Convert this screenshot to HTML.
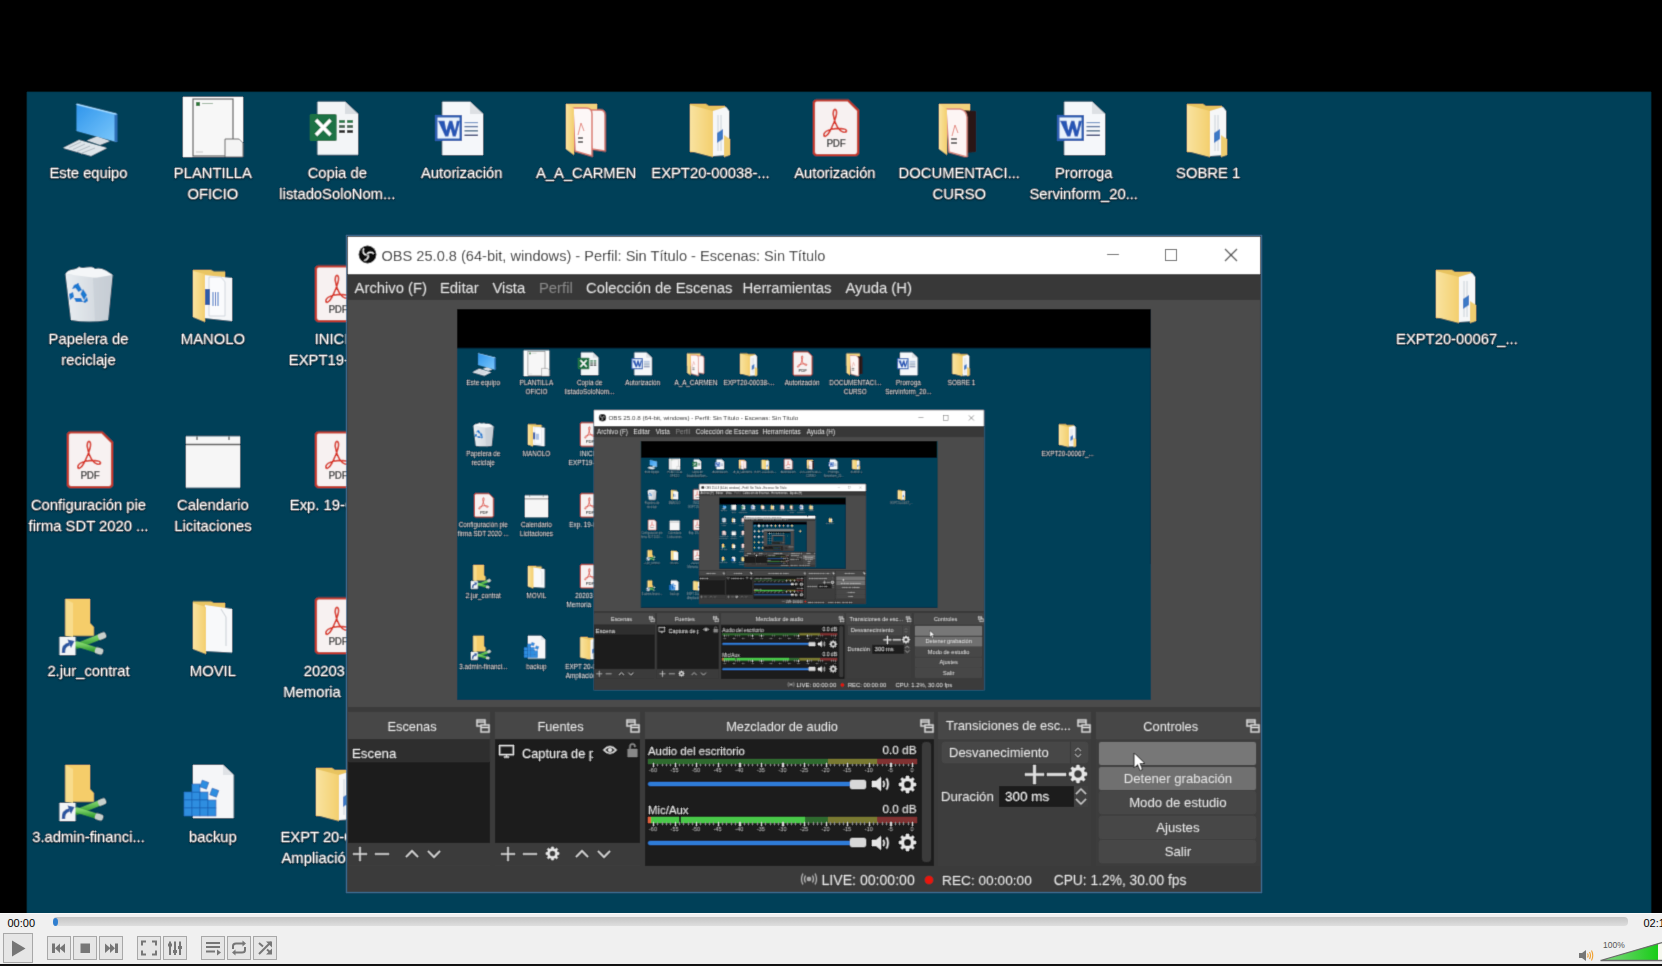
<!DOCTYPE html>
<html><head><meta charset="utf-8"><style>
*{margin:0;padding:0}
html,body{width:1662px;height:966px;overflow:hidden;background:#000;font-family:"Liberation Sans",sans-serif}
#vid{position:absolute;left:0;top:0;width:1662px;height:913px;background:#000;overflow:hidden;filter:url(#soft2)}
.scr{position:absolute;left:27px;top:0;width:1624px;height:913px}
.scr.nest{left:0;top:0;background:#000;transform-origin:0 0;transform:scale(0.4272)}
.dt{position:absolute;left:0;top:92px;width:1624px;height:821px;background:#003f58}
.ic{position:absolute;width:64px;height:64px;overflow:visible}
.lb{position:absolute;width:160px;text-align:center;color:#fff;font-size:14.8px;line-height:20px;white-space:nowrap;text-shadow:0 1px 2px rgba(0,0,0,.9),0 0 1px rgba(0,0,0,.8)}
.lbl{position:absolute;color:#fff;font-size:14.8px;line-height:20px;white-space:nowrap;text-shadow:0 1px 2px rgba(0,0,0,.9)}
.obs{position:absolute;left:320px;top:236px;width:914px;height:656px;background:#3a3a3a;box-shadow:0 0 0 1px #3d6e95;overflow:hidden}
.obs .b,.obs .t,.obs .pv{position:absolute}
.obs .t{white-space:nowrap;line-height:17px}
.pv{width:694px;height:391px;overflow:hidden}
.pv0{}
  .nest .lb,.nest .lbl{color:#e4eaee}
.nest .nest .lb,.nest .nest .lbl{opacity:.6}
#ctl{position:absolute;left:0;top:913px;width:1662px;height:53px;background:#f0f0f0}
#ctl .b{position:absolute}
</style></head>
<body>
<svg width="0" height="0" style="position:absolute">
<defs>
<filter id="soft2" x="0" y="0" width="100%" height="100%"><feConvolveMatrix order="3" kernelMatrix="0 1 0 1 4 1 0 1 0" divisor="8" edgeMode="duplicate"/></filter>
<filter id="soft" x="0" y="0" width="100%" height="100%"><feConvolveMatrix order="3" kernelMatrix="1 2 1 2 4 2 1 2 1" divisor="16" edgeMode="duplicate"/></filter>
<linearGradient id="gMon" x1="0" y1="0" x2="1" y2="1"><stop offset="0" stop-color="#2f95ec"/><stop offset="1" stop-color="#7cc8fb"/></linearGradient>
<linearGradient id="gFold" x1="0" y1="0" x2="1" y2="0"><stop offset="0" stop-color="#f9e3a0"/><stop offset="1" stop-color="#f3cf6e"/></linearGradient>
<linearGradient id="gBin" x1="0" y1="0" x2="1" y2="0"><stop offset="0" stop-color="#e9edf1"/><stop offset="1" stop-color="#c9d0d6"/></linearGradient>
<linearGradient id="gCab" x1="0" y1="0" x2="0" y2="1"><stop offset="0" stop-color="#7fd36a"/><stop offset="1" stop-color="#2f9a2f"/></linearGradient>

<symbol id="i-pc" viewBox="0 0 64 64">
 <polygon points="19.5,11 59.5,21 59.5,49 19.5,38" fill="url(#gMon)"/>
 <polygon points="57.5,20.5 60.5,21 60.5,49 57.5,48.5" fill="#2a6db5"/>
 <polygon points="19.5,10.5 59.5,20.5 59.5,22 19.5,12" fill="#9fd8ff"/>
 <polygon points="6,55 22,47 50,55 34,63" fill="#dfe5ea"/>
 <path d="M12,54.5 L24,49 M16,56.5 L28,51 M20,58.5 L33,53 M24,60.5 L38,55" stroke="#aab4bc" stroke-width="0.9"/>
 <polygon points="30,47.5 40,43.5 53,48 43,52" fill="#d6dce2"/>
</symbol>

<symbol id="i-plant" viewBox="0 0 64 64">
 <rect x="2" y="4" width="60" height="60" fill="#fbfbfb"/>
 <rect x="12" y="6" width="40" height="57" fill="#f7f7f7" stroke="#606060" stroke-width="1.2"/>
 <rect x="15" y="9" width="4" height="4" fill="#2f7a3b"/>
 <path d="M21,10.5 H32" stroke="#9bb59f" stroke-width="1"/>
 <path d="M15,59 H22" stroke="#bbb" stroke-width="0.8"/>
 <path d="M44,46 H58 L62,50 V64 H44 Z" fill="#f4f4f4" stroke="#6a6a6a" stroke-width="1"/>
</symbol>

<symbol id="i-xls" viewBox="0 0 64 64">
 <path d="M12.5,8.7 H40 L53,21 V61.7 H12.5 Z" fill="#f3f5f7"/>
 <path d="M40,8.7 V21 H53 Z" fill="#d9dde1"/>
 <g fill="#2f7f4f"><rect x="34" y="27" width="6" height="3"/><rect x="42" y="27" width="6" height="3"/><rect x="34" y="32" width="6" height="3" fill="#4c6b57"/><rect x="42" y="32" width="6" height="3" fill="#4c6b57"/><rect x="34" y="37" width="6" height="3" fill="#333"/><rect x="42" y="37" width="6" height="3" fill="#333"/></g>
 <rect x="4.7" y="21" width="27" height="27" rx="1.5" fill="#1f7244"/>
 <path d="M11,27 L25.5,42 M25.5,27 L11,42" stroke="#ffffff" stroke-width="3.4"/>
</symbol>

<symbol id="i-doc" viewBox="0 0 64 64">
 <path d="M12.3,8.7 H40 L53,21 V62 H12.3 Z" fill="#f5f7fa"/>
 <path d="M40,8.7 V21 H53 Z" fill="#dde0e4"/>
 <path d="M34.5,29.6 H48" stroke="#6f93c4" stroke-width="1.2"/>
 <path d="M34.5,33.6 H48" stroke="#4f6f9e" stroke-width="1.4"/>
 <path d="M34.5,37.8 H48" stroke="#5d7a95" stroke-width="1.6"/>
 <path d="M34.5,42.3 H48" stroke="#1d2f6a" stroke-width="1.4"/>
 <rect x="5" y="22" width="27" height="26" fill="#2b5db0"/>
 <rect x="7.5" y="24.5" width="22" height="21" fill="#e9f3fd"/>
 <path d="M8,27.8 H14.5 L16.3,37.5 L19.2,27.8 H22.3 L25,37.5 L26.8,27.8 H30 L25.8,43.5 H22.8 L20.6,35.5 L18.3,43.5 H15.2 Z" fill="#2857b5"/>
</symbol>

<symbol id="i-fpdf" viewBox="0 0 64 64">
 <path d="M12,11 H43 V40 H12 Z" fill="#f1d27d"/>
 <path d="M32,17 H46 Q51,17 51,22 V58 L38,56 Z" fill="#fbf4f4" stroke="#d9776d" stroke-width="1.5"/>
 <path d="M19,15 H32 Q38,15 38,21 V63 L21,58 Z" fill="#fdf7f7" stroke="#d9776d" stroke-width="1.5"/>
 <path d="M27,30 L24,42 M27,30 L30,38" stroke="#e07a70" stroke-width="0.9" fill="none"/>
 <path d="M24,45 H29 M24,49 H29" stroke="#444" stroke-width="1.6"/>
 <path d="M12,11 L20,15 V62 L12,56 Z" fill="url(#gFold)"/>
</symbol>

<symbol id="i-fdoc" viewBox="0 0 64 64">
 <path d="M11,11 H27 L30,13 H46 V59 H11 Z" fill="#e8c35f"/>
 <path d="M34,18 L47,14 L50,18 V62 L34,63 Z" fill="#f6f7f8"/>
 <path d="M39,22 V58 M42,22 V58" stroke="#bfc7cf" stroke-width="0.8"/>
 <path d="M38,40 L44,36 V46 L38,50 Z" fill="#3d7ac6"/>
 <path d="M11,12 L34,18 V64 L11,58 Z" fill="url(#gFold)"/>
 <path d="M45,42 L51,46 V62 L45,64 Z" fill="#efcd70"/>
</symbol>

<symbol id="i-fdark" viewBox="0 0 64 64">
 <path d="M12,11 H43 V40 H12 Z" fill="#f1d27d"/>
 <path d="M18,16 L49,18 V59 L38,60 Z" fill="#2b1514"/>
 <path d="M19,16 H33 Q39,17 40,24 V64 L22,59 Z" fill="#fdf5f4" stroke="#d9877d" stroke-width="1.4"/>
 <path d="M28,32 L25,43 M28,32 L31,40" stroke="#e07a70" stroke-width="0.9" fill="none"/>
 <path d="M24,46 H30 M24,50 H30" stroke="#444" stroke-width="1.6"/>
 <path d="M12,11 L20,16 V62 L12,56 Z" fill="url(#gFold)"/>
</symbol>

<symbol id="i-fplain" viewBox="0 0 64 64">
 <path d="M12,10.4 H30 L33,12 H44 V58 H12 Z" fill="#e9c563"/>
 <path d="M24,14 L51,18 V61.6 L24,60 Z" fill="#f8f9fa"/>
 <path d="M40,18 L45,26 V55" stroke="#c9ced3" stroke-width="1" fill="none"/>
 <path d="M12,12 L25,16 V63 L12,58 Z" fill="url(#gFold)"/>
</symbol>

<symbol id="i-fword" viewBox="0 0 64 64">
 <path d="M12,11 H30 L33,12.5 H44 V58 H12 Z" fill="#e9c563"/>
 <path d="M23,16 L51,19 V62 L23,59 Z" fill="#f6f7f9"/>
 <path d="M28,18 H40 L44,23 V57 H28 Z" fill="#fafbfd" stroke="#c8ced6" stroke-width="0.8"/>
 <rect x="24" y="30" width="5" height="16" fill="#2d5ba8"/>
 <path d="M32,33 V47 M34.5,33 V47 M37,33 V47" stroke="#3b6fc1" stroke-width="1"/>
 <path d="M12,12 L24,15 V63 L12,58 Z" fill="url(#gFold)"/>
</symbol>

<symbol id="i-pdf" viewBox="0 0 64 64">
 <path d="M13,7.5 H45 L55,17.5 V59 Q55,62 52,62 H14 Q11,62 11,59 V10.5 Q11,7.5 14,7.5 Z" fill="#f7f1f1" stroke="#c53a2c" stroke-width="2.2"/>
 <path d="M31,25 C29,19 31,15 33,17 C35,20 31,30 27,38 C24,44 20,45 21,41 C22,37 34,34 41,36 C45,37 44,40 40,39 C36,38 32,31 31,25 Z" fill="none" stroke="#d8392b" stroke-width="1.7"/>
 <text x="33" y="54" font-family="Liberation Sans" font-weight="bold" font-size="10" fill="#505050" text-anchor="middle" letter-spacing="-0.4">PDF</text>
</symbol>

<symbol id="i-bin" viewBox="0 0 64 64">
 <path d="M8.5,15 L55.5,16 L51,61 Q32,64 14,61 Z" fill="url(#gBin)"/>
 <path d="M8.5,15 C12,9 18,12 22,8 C27,11 33,6 38,10 C44,8 50,12 55.5,16 L40,19 Z" fill="#f4f6f8"/>
 <path d="M36,19 L55.5,16 L51,61 L38,62 Z" fill="#c4ccd3" opacity="0.6"/>
 <g fill="#1f7ad0">
  <path d="M17,27 L21,24 L25,31 L21.5,33 Z"/>
  <path d="M26,30 L30,36 L27,41 L23.5,35 Z"/>
  <path d="M26,43 L19,43 L17,39 L24,39 Z"/>
  <path d="M13,41 L12,35 L16,33 L17,38 Z"/>
  <path d="M22,24 L17,26 L15,30 L19,29 Z"/>
  <path d="M30,38 L31,42 L28,44 L26,43 Z"/>
 </g>
</symbol>

<symbol id="i-cal" viewBox="0 0 64 64">
 <rect x="5" y="11.4" width="54" height="51.2" fill="#f6f6f6"/>
 <path d="M5,19.5 H59" stroke="#555" stroke-width="1.6"/>
 <path d="M16,11.4 V15 M48,11.4 V15" stroke="#666" stroke-width="1.4"/>
</symbol>

<symbol id="i-net" viewBox="0 0 64 64">
 <path d="M8.5,8 H33 V32 L36.8,36 V44.7 H8.5 Z" fill="#f5cd6a"/>
 <path d="M8.5,8 L16,12 V46 L8.5,44.7 Z" fill="#f8dc8c"/>
 <path d="M20,55 L45,45" stroke="url(#gCab)" stroke-width="5.5" stroke-linecap="round"/>
 <path d="M20,53 L42,60" stroke="url(#gCab)" stroke-width="5.5" stroke-linecap="round"/>
 <rect x="41" y="42" width="8" height="6" rx="2" fill="#c8d0cc" transform="rotate(-22 45 45)"/>
 <rect x="38" y="57" width="8" height="6" rx="2" fill="#c8d0cc" transform="rotate(18 42 60)"/>
 <rect x="2.5" y="46" width="16" height="19" fill="#f2f4f6"/>
 <path d="M6.5,62 Q6,54 12.5,53" stroke="#2b56a0" stroke-width="3.4" fill="none"/><path d="M10.5,48.5 L17.5,50 L14,57 Z" fill="#2b56a0"/>
</symbol>

<symbol id="i-bak" viewBox="0 0 64 64">
 <path d="M12,8 H42 L52.6,18 V61 H12 Z" fill="#f5f6f8"/>
 <path d="M42,8 V18 H52.6 Z" fill="#dfe2e6"/>
 <g fill="#2f8ee0" stroke="#1a5fb0" stroke-width="0.6">
  <rect x="3" y="35" width="8" height="8"/><rect x="11" y="35" width="8" height="8"/><rect x="19" y="35" width="8" height="8"/>
  <rect x="3" y="43" width="8" height="8"/><rect x="11" y="43" width="8" height="8"/><rect x="19" y="43" width="8" height="8"/><rect x="27" y="43" width="8" height="8"/>
  <rect x="3" y="51" width="8" height="8"/><rect x="11" y="51" width="8" height="8"/><rect x="19" y="51" width="8" height="8"/><rect x="27" y="51" width="8" height="8"/>
  <rect x="11" y="27" width="8" height="8"/>
  <rect x="20" y="24" width="7" height="7" transform="rotate(20 23 27)"/>
  <rect x="30" y="32" width="7" height="7" transform="rotate(20 33 35)"/>
 </g>
</symbol>

<symbol id="i-undock" viewBox="0 0 14 14">
 <rect x="1" y="1" width="8" height="6" fill="none" stroke="#d8d8d8" stroke-width="1.4"/>
 <path d="M1,3 H9" stroke="#d8d8d8" stroke-width="1.4"/>
 <rect x="5" y="6" width="8" height="7" fill="#474747" stroke="#d8d8d8" stroke-width="1.4"/>
 <path d="M5,8.5 H13" stroke="#d8d8d8" stroke-width="1.4"/>
</symbol>

<symbol id="i-gear" viewBox="0 0 20 20">
 <path fill="#e6e6e6" fill-rule="evenodd" d="M8.6,1 H11.4 L11.9,3.4 L13.6,4.1 L15.6,2.7 L17.3,4.4 L15.9,6.4 L16.6,8.1 L19,8.6 V11.4 L16.6,11.9 L15.9,13.6 L17.3,15.6 L15.6,17.3 L13.6,15.9 L11.9,16.6 L11.4,19 H8.6 L8.1,16.6 L6.4,15.9 L4.4,17.3 L2.7,15.6 L4.1,13.6 L3.4,11.9 L1,11.4 V8.6 L3.4,8.1 L4.1,6.4 L2.7,4.4 L4.4,2.7 L6.4,4.1 L8.1,3.4 Z M10,6.2 A3.8,3.8 0 1 0 10,13.8 A3.8,3.8 0 1 0 10,6.2 Z"/>
</symbol>

<symbol id="i-spk" viewBox="0 0 20 16">
 <path d="M1,5 H5 L10,1 V15 L5,11 H1 Z" fill="#e6e6e6"/>
 <path d="M12.5,5 Q14,8 12.5,11" stroke="#e6e6e6" stroke-width="1.6" fill="none"/>
 <path d="M15.5,2.5 Q18.5,8 15.5,13.5" stroke="#e6e6e6" stroke-width="1.6" fill="none"/>
</symbol>

<symbol id="i-obs" viewBox="0 0 20 20">
 <circle cx="10" cy="10" r="9.4" fill="#111"/>
 <g fill="none" stroke="#e8e8e8" stroke-width="1.5">
  <path d="M6.2,3.6 A4.3,4.3 0 0 0 9.3,10.6"/>
  <path d="M16.5,9.2 A4.3,4.3 0 0 0 9.6,9.4"/>
  <path d="M6.5,16.2 A4.3,4.3 0 0 0 10.3,10.1"/>
 </g>
</symbol>
</defs>
</svg>
<div id="vid"><div class="scr"><div class="dt"></div><svg class="ic" style="left:29.5px;top:93.0px" viewBox="0 0 64 64"><use href="#i-pc"/></svg><div class="lb" style="left:-18.5px;top:163.0px">Este equipo</div><svg class="ic" style="left:153.9px;top:93.0px" viewBox="0 0 64 64"><use href="#i-plant"/></svg><div class="lb" style="left:105.9px;top:163.0px">PLANTILLA</div><div class="lb" style="left:105.9px;top:184.0px">OFICIO</div><svg class="ic" style="left:278.3px;top:93.0px" viewBox="0 0 64 64"><use href="#i-xls"/></svg><div class="lb" style="left:230.3px;top:163.0px">Copia de</div><div class="lb" style="left:230.3px;top:184.0px">listadoSoloNom...</div><svg class="ic" style="left:402.7px;top:93.0px" viewBox="0 0 64 64"><use href="#i-doc"/></svg><div class="lb" style="left:354.7px;top:163.0px">Autorización</div><svg class="ic" style="left:527.1px;top:93.0px" viewBox="0 0 64 64"><use href="#i-fpdf"/></svg><div class="lb" style="left:479.1px;top:163.0px">A_A_CARMEN</div><svg class="ic" style="left:651.5px;top:93.0px" viewBox="0 0 64 64"><use href="#i-fdoc"/></svg><div class="lb" style="left:603.5px;top:163.0px">EXPT20-00038-...</div><svg class="ic" style="left:775.9px;top:93.0px" viewBox="0 0 64 64"><use href="#i-pdf"/></svg><div class="lb" style="left:727.9px;top:163.0px">Autorización</div><svg class="ic" style="left:900.3px;top:93.0px" viewBox="0 0 64 64"><use href="#i-fdark"/></svg><div class="lb" style="left:852.3px;top:163.0px">DOCUMENTACI...</div><div class="lb" style="left:852.3px;top:184.0px">CURSO</div><svg class="ic" style="left:1024.7px;top:93.0px" viewBox="0 0 64 64"><use href="#i-doc"/></svg><div class="lb" style="left:976.7px;top:163.0px">Prorroga</div><div class="lb" style="left:976.7px;top:184.0px">Servinform_20...</div><svg class="ic" style="left:1149.1px;top:93.0px" viewBox="0 0 64 64"><use href="#i-fdoc"/></svg><div class="lb" style="left:1101.1px;top:163.0px">SOBRE 1</div><svg class="ic" style="left:1397.9px;top:259.0px" viewBox="0 0 64 64"><use href="#i-fdoc"/></svg><div class="lb" style="left:1349.9px;top:329.0px">EXPT20-00067_...</div><svg class="ic" style="left:29.5px;top:259.0px" viewBox="0 0 64 64"><use href="#i-bin"/></svg><div class="lb" style="left:-18.5px;top:329.0px">Papelera de</div><div class="lb" style="left:-18.5px;top:350.0px">reciclaje</div><svg class="ic" style="left:153.9px;top:259.0px" viewBox="0 0 64 64"><use href="#i-fword"/></svg><div class="lb" style="left:105.9px;top:329.0px">MANOLO</div><svg class="ic" style="left:29.5px;top:425.0px" viewBox="0 0 64 64"><use href="#i-pdf"/></svg><div class="lb" style="left:-18.5px;top:495.0px">Configuración pie</div><div class="lb" style="left:-18.5px;top:516.0px">firma SDT 2020 ...</div><svg class="ic" style="left:153.9px;top:425.0px" viewBox="0 0 64 64"><use href="#i-cal"/></svg><div class="lb" style="left:105.9px;top:495.0px">Calendario</div><div class="lb" style="left:105.9px;top:516.0px">Licitaciones</div><svg class="ic" style="left:29.5px;top:591.0px" viewBox="0 0 64 64"><use href="#i-net"/></svg><div class="lb" style="left:-18.5px;top:661.0px">2.jur_contrat</div><svg class="ic" style="left:153.9px;top:591.0px" viewBox="0 0 64 64"><use href="#i-fplain"/></svg><div class="lb" style="left:105.9px;top:661.0px">MOVIL</div><svg class="ic" style="left:29.5px;top:757.0px" viewBox="0 0 64 64"><use href="#i-net"/></svg><div class="lb" style="left:-18.5px;top:827.0px">3.admin-financi...</div><svg class="ic" style="left:153.9px;top:757.0px" viewBox="0 0 64 64"><use href="#i-bak"/></svg><div class="lb" style="left:105.9px;top:827.0px">backup</div><svg class="ic" style="left:278.3px;top:259.0px" viewBox="0 0 64 64"><use href="#i-pdf"/></svg><div class="lbl" style="left:287.7px;top:329.0px">INICIO</div><div class="lbl" style="left:261.8px;top:350.0px">EXPT19-00</div><svg class="ic" style="left:278.3px;top:425.0px" viewBox="0 0 64 64"><use href="#i-pdf"/></svg><div class="lbl" style="left:262.8px;top:495.0px">Exp. 19-00</div><svg class="ic" style="left:278.3px;top:591.0px" viewBox="0 0 64 64"><use href="#i-pdf"/></svg><div class="lbl" style="left:276.7px;top:661.0px">20203</div><div class="lbl" style="left:256.3px;top:682.0px">Memoria</div><svg class="ic" style="left:278.3px;top:757.0px" viewBox="0 0 64 64"><use href="#i-fdoc"/></svg><div class="lbl" style="left:253.4px;top:827.0px">EXPT 20-00</div><div class="lbl" style="left:254.5px;top:848.0px">Ampliación</div><div class="obs"><div class="b" style="left:1.0px;top:1.0px;width:912.0px;height:37.0px;background:#fff"></div><svg class="ic" style="left:11.0px;top:9.0px;width:19px;height:19px;" viewBox="0 0 20 20"><use href="#i-obs"/></svg><div class="t" style="left:34.5px;top:11.8px;font-size:14.6px;color:#2e2e2e;white-space:nowrap">OBS 25.0.8 (64-bit, windows) - Perfil: Sin Título - Escenas: Sin Título</div><div class="b" style="left:760.0px;top:18.0px;width:12.0px;height:1.3px;background:#444"></div><div class="b" style="left:818.0px;top:12.5px;width:12.0px;height:12.0px;border:1.2px solid #444;box-sizing:border-box"></div><svg class="ic" style="left:877px;top:12px;width:14px;height:14px" viewBox="0 0 14 14"><path d="M1,1 L13,13 M13,1 L1,13" stroke="#444" stroke-width="1.3"/></svg><div class="b" style="left:1.0px;top:38.0px;width:912.0px;height:26.0px;background:#393939"></div><div class="t" style="left:7.6px;top:44.0px;font-size:14.8px;color:#dedede">Archivo (F)</div><div class="t" style="left:93.0px;top:44.0px;font-size:14.8px;color:#dedede">Editar</div><div class="t" style="left:145.5px;top:44.0px;font-size:14.8px;color:#dedede">Vista</div><div class="t" style="left:192.0px;top:44.0px;font-size:14.8px;color:#858585">Perfil</div><div class="t" style="left:239.0px;top:44.0px;font-size:14.8px;color:#dedede">Colección de Escenas</div><div class="t" style="left:395.5px;top:44.0px;font-size:14.8px;color:#dedede">Herramientas</div><div class="t" style="left:498.5px;top:44.0px;font-size:14.8px;color:#dedede">Ayuda (H)</div><div class="b" style="left:1.0px;top:64.0px;width:912.0px;height:407.0px;background:#4c4c4c"></div><div class="pv pv0" style="left:110px;top:73px"><div class="scr nest"><div class="dt"></div><svg class="ic" style="left:29.5px;top:93.0px" viewBox="0 0 64 64"><use href="#i-pc"/></svg><div class="lb" style="left:-18.5px;top:163.0px">Este equipo</div><svg class="ic" style="left:153.9px;top:93.0px" viewBox="0 0 64 64"><use href="#i-plant"/></svg><div class="lb" style="left:105.9px;top:163.0px">PLANTILLA</div><div class="lb" style="left:105.9px;top:184.0px">OFICIO</div><svg class="ic" style="left:278.3px;top:93.0px" viewBox="0 0 64 64"><use href="#i-xls"/></svg><div class="lb" style="left:230.3px;top:163.0px">Copia de</div><div class="lb" style="left:230.3px;top:184.0px">listadoSoloNom...</div><svg class="ic" style="left:402.7px;top:93.0px" viewBox="0 0 64 64"><use href="#i-doc"/></svg><div class="lb" style="left:354.7px;top:163.0px">Autorización</div><svg class="ic" style="left:527.1px;top:93.0px" viewBox="0 0 64 64"><use href="#i-fpdf"/></svg><div class="lb" style="left:479.1px;top:163.0px">A_A_CARMEN</div><svg class="ic" style="left:651.5px;top:93.0px" viewBox="0 0 64 64"><use href="#i-fdoc"/></svg><div class="lb" style="left:603.5px;top:163.0px">EXPT20-00038-...</div><svg class="ic" style="left:775.9px;top:93.0px" viewBox="0 0 64 64"><use href="#i-pdf"/></svg><div class="lb" style="left:727.9px;top:163.0px">Autorización</div><svg class="ic" style="left:900.3px;top:93.0px" viewBox="0 0 64 64"><use href="#i-fdark"/></svg><div class="lb" style="left:852.3px;top:163.0px">DOCUMENTACI...</div><div class="lb" style="left:852.3px;top:184.0px">CURSO</div><svg class="ic" style="left:1024.7px;top:93.0px" viewBox="0 0 64 64"><use href="#i-doc"/></svg><div class="lb" style="left:976.7px;top:163.0px">Prorroga</div><div class="lb" style="left:976.7px;top:184.0px">Servinform_20...</div><svg class="ic" style="left:1149.1px;top:93.0px" viewBox="0 0 64 64"><use href="#i-fdoc"/></svg><div class="lb" style="left:1101.1px;top:163.0px">SOBRE 1</div><svg class="ic" style="left:1397.9px;top:259.0px" viewBox="0 0 64 64"><use href="#i-fdoc"/></svg><div class="lb" style="left:1349.9px;top:329.0px">EXPT20-00067_...</div><svg class="ic" style="left:29.5px;top:259.0px" viewBox="0 0 64 64"><use href="#i-bin"/></svg><div class="lb" style="left:-18.5px;top:329.0px">Papelera de</div><div class="lb" style="left:-18.5px;top:350.0px">reciclaje</div><svg class="ic" style="left:153.9px;top:259.0px" viewBox="0 0 64 64"><use href="#i-fword"/></svg><div class="lb" style="left:105.9px;top:329.0px">MANOLO</div><svg class="ic" style="left:29.5px;top:425.0px" viewBox="0 0 64 64"><use href="#i-pdf"/></svg><div class="lb" style="left:-18.5px;top:495.0px">Configuración pie</div><div class="lb" style="left:-18.5px;top:516.0px">firma SDT 2020 ...</div><svg class="ic" style="left:153.9px;top:425.0px" viewBox="0 0 64 64"><use href="#i-cal"/></svg><div class="lb" style="left:105.9px;top:495.0px">Calendario</div><div class="lb" style="left:105.9px;top:516.0px">Licitaciones</div><svg class="ic" style="left:29.5px;top:591.0px" viewBox="0 0 64 64"><use href="#i-net"/></svg><div class="lb" style="left:-18.5px;top:661.0px">2.jur_contrat</div><svg class="ic" style="left:153.9px;top:591.0px" viewBox="0 0 64 64"><use href="#i-fplain"/></svg><div class="lb" style="left:105.9px;top:661.0px">MOVIL</div><svg class="ic" style="left:29.5px;top:757.0px" viewBox="0 0 64 64"><use href="#i-net"/></svg><div class="lb" style="left:-18.5px;top:827.0px">3.admin-financi...</div><svg class="ic" style="left:153.9px;top:757.0px" viewBox="0 0 64 64"><use href="#i-bak"/></svg><div class="lb" style="left:105.9px;top:827.0px">backup</div><svg class="ic" style="left:278.3px;top:259.0px" viewBox="0 0 64 64"><use href="#i-pdf"/></svg><div class="lbl" style="left:287.7px;top:329.0px">INICIO</div><div class="lbl" style="left:261.8px;top:350.0px">EXPT19-00</div><svg class="ic" style="left:278.3px;top:425.0px" viewBox="0 0 64 64"><use href="#i-pdf"/></svg><div class="lbl" style="left:262.8px;top:495.0px">Exp. 19-00</div><svg class="ic" style="left:278.3px;top:591.0px" viewBox="0 0 64 64"><use href="#i-pdf"/></svg><div class="lbl" style="left:276.7px;top:661.0px">20203</div><div class="lbl" style="left:256.3px;top:682.0px">Memoria</div><svg class="ic" style="left:278.3px;top:757.0px" viewBox="0 0 64 64"><use href="#i-fdoc"/></svg><div class="lbl" style="left:253.4px;top:827.0px">EXPT 20-00</div><div class="lbl" style="left:254.5px;top:848.0px">Ampliación</div><div class="obs"><div class="b" style="left:1.0px;top:1.0px;width:912.0px;height:37.0px;background:#fff"></div><svg class="ic" style="left:11.0px;top:9.0px;width:19px;height:19px;" viewBox="0 0 20 20"><use href="#i-obs"/></svg><div class="t" style="left:34.5px;top:11.8px;font-size:14.6px;color:#2e2e2e;white-space:nowrap">OBS 25.0.8 (64-bit, windows) - Perfil: Sin Título - Escenas: Sin Título</div><div class="b" style="left:760.0px;top:18.0px;width:12.0px;height:1.3px;background:#444"></div><div class="b" style="left:818.0px;top:12.5px;width:12.0px;height:12.0px;border:1.2px solid #444;box-sizing:border-box"></div><svg class="ic" style="left:877px;top:12px;width:14px;height:14px" viewBox="0 0 14 14"><path d="M1,1 L13,13 M13,1 L1,13" stroke="#444" stroke-width="1.3"/></svg><div class="b" style="left:1.0px;top:38.0px;width:912.0px;height:26.0px;background:#393939"></div><div class="t" style="left:7.6px;top:44.0px;font-size:14.8px;color:#dedede">Archivo (F)</div><div class="t" style="left:93.0px;top:44.0px;font-size:14.8px;color:#dedede">Editar</div><div class="t" style="left:145.5px;top:44.0px;font-size:14.8px;color:#dedede">Vista</div><div class="t" style="left:192.0px;top:44.0px;font-size:14.8px;color:#858585">Perfil</div><div class="t" style="left:239.0px;top:44.0px;font-size:14.8px;color:#dedede">Colección de Escenas</div><div class="t" style="left:395.5px;top:44.0px;font-size:14.8px;color:#dedede">Herramientas</div><div class="t" style="left:498.5px;top:44.0px;font-size:14.8px;color:#dedede">Ayuda (H)</div><div class="b" style="left:1.0px;top:64.0px;width:912.0px;height:407.0px;background:#4c4c4c"></div><div class="pv" style="left:110px;top:73px"><div class="scr nest"><div class="dt"></div><svg class="ic" style="left:29.5px;top:93.0px" viewBox="0 0 64 64"><use href="#i-pc"/></svg><div class="lb" style="left:-18.5px;top:163.0px">Este equipo</div><svg class="ic" style="left:153.9px;top:93.0px" viewBox="0 0 64 64"><use href="#i-plant"/></svg><div class="lb" style="left:105.9px;top:163.0px">PLANTILLA</div><div class="lb" style="left:105.9px;top:184.0px">OFICIO</div><svg class="ic" style="left:278.3px;top:93.0px" viewBox="0 0 64 64"><use href="#i-xls"/></svg><div class="lb" style="left:230.3px;top:163.0px">Copia de</div><div class="lb" style="left:230.3px;top:184.0px">listadoSoloNom...</div><svg class="ic" style="left:402.7px;top:93.0px" viewBox="0 0 64 64"><use href="#i-doc"/></svg><div class="lb" style="left:354.7px;top:163.0px">Autorización</div><svg class="ic" style="left:527.1px;top:93.0px" viewBox="0 0 64 64"><use href="#i-fpdf"/></svg><div class="lb" style="left:479.1px;top:163.0px">A_A_CARMEN</div><svg class="ic" style="left:651.5px;top:93.0px" viewBox="0 0 64 64"><use href="#i-fdoc"/></svg><div class="lb" style="left:603.5px;top:163.0px">EXPT20-00038-...</div><svg class="ic" style="left:775.9px;top:93.0px" viewBox="0 0 64 64"><use href="#i-pdf"/></svg><div class="lb" style="left:727.9px;top:163.0px">Autorización</div><svg class="ic" style="left:900.3px;top:93.0px" viewBox="0 0 64 64"><use href="#i-fdark"/></svg><div class="lb" style="left:852.3px;top:163.0px">DOCUMENTACI...</div><div class="lb" style="left:852.3px;top:184.0px">CURSO</div><svg class="ic" style="left:1024.7px;top:93.0px" viewBox="0 0 64 64"><use href="#i-doc"/></svg><div class="lb" style="left:976.7px;top:163.0px">Prorroga</div><div class="lb" style="left:976.7px;top:184.0px">Servinform_20...</div><svg class="ic" style="left:1149.1px;top:93.0px" viewBox="0 0 64 64"><use href="#i-fdoc"/></svg><div class="lb" style="left:1101.1px;top:163.0px">SOBRE 1</div><svg class="ic" style="left:1397.9px;top:259.0px" viewBox="0 0 64 64"><use href="#i-fdoc"/></svg><div class="lb" style="left:1349.9px;top:329.0px">EXPT20-00067_...</div><svg class="ic" style="left:29.5px;top:259.0px" viewBox="0 0 64 64"><use href="#i-bin"/></svg><div class="lb" style="left:-18.5px;top:329.0px">Papelera de</div><div class="lb" style="left:-18.5px;top:350.0px">reciclaje</div><svg class="ic" style="left:153.9px;top:259.0px" viewBox="0 0 64 64"><use href="#i-fword"/></svg><div class="lb" style="left:105.9px;top:329.0px">MANOLO</div><svg class="ic" style="left:29.5px;top:425.0px" viewBox="0 0 64 64"><use href="#i-pdf"/></svg><div class="lb" style="left:-18.5px;top:495.0px">Configuración pie</div><div class="lb" style="left:-18.5px;top:516.0px">firma SDT 2020 ...</div><svg class="ic" style="left:153.9px;top:425.0px" viewBox="0 0 64 64"><use href="#i-cal"/></svg><div class="lb" style="left:105.9px;top:495.0px">Calendario</div><div class="lb" style="left:105.9px;top:516.0px">Licitaciones</div><svg class="ic" style="left:29.5px;top:591.0px" viewBox="0 0 64 64"><use href="#i-net"/></svg><div class="lb" style="left:-18.5px;top:661.0px">2.jur_contrat</div><svg class="ic" style="left:153.9px;top:591.0px" viewBox="0 0 64 64"><use href="#i-fplain"/></svg><div class="lb" style="left:105.9px;top:661.0px">MOVIL</div><svg class="ic" style="left:29.5px;top:757.0px" viewBox="0 0 64 64"><use href="#i-net"/></svg><div class="lb" style="left:-18.5px;top:827.0px">3.admin-financi...</div><svg class="ic" style="left:153.9px;top:757.0px" viewBox="0 0 64 64"><use href="#i-bak"/></svg><div class="lb" style="left:105.9px;top:827.0px">backup</div><svg class="ic" style="left:278.3px;top:259.0px" viewBox="0 0 64 64"><use href="#i-pdf"/></svg><div class="lbl" style="left:287.7px;top:329.0px">INICIO</div><div class="lbl" style="left:261.8px;top:350.0px">EXPT19-00</div><svg class="ic" style="left:278.3px;top:425.0px" viewBox="0 0 64 64"><use href="#i-pdf"/></svg><div class="lbl" style="left:262.8px;top:495.0px">Exp. 19-00</div><svg class="ic" style="left:278.3px;top:591.0px" viewBox="0 0 64 64"><use href="#i-pdf"/></svg><div class="lbl" style="left:276.7px;top:661.0px">20203</div><div class="lbl" style="left:256.3px;top:682.0px">Memoria</div><svg class="ic" style="left:278.3px;top:757.0px" viewBox="0 0 64 64"><use href="#i-fdoc"/></svg><div class="lbl" style="left:253.4px;top:827.0px">EXPT 20-00</div><div class="lbl" style="left:254.5px;top:848.0px">Ampliación</div><div class="obs"><div class="b" style="left:1.0px;top:1.0px;width:912.0px;height:37.0px;background:#fff"></div><svg class="ic" style="left:11.0px;top:9.0px;width:19px;height:19px;" viewBox="0 0 20 20"><use href="#i-obs"/></svg><div class="t" style="left:34.5px;top:11.8px;font-size:14.6px;color:#2e2e2e;white-space:nowrap">OBS 25.0.8 (64-bit, windows) - Perfil: Sin Título - Escenas: Sin Título</div><div class="b" style="left:760.0px;top:18.0px;width:12.0px;height:1.3px;background:#444"></div><div class="b" style="left:818.0px;top:12.5px;width:12.0px;height:12.0px;border:1.2px solid #444;box-sizing:border-box"></div><svg class="ic" style="left:877px;top:12px;width:14px;height:14px" viewBox="0 0 14 14"><path d="M1,1 L13,13 M13,1 L1,13" stroke="#444" stroke-width="1.3"/></svg><div class="b" style="left:1.0px;top:38.0px;width:912.0px;height:26.0px;background:#393939"></div><div class="t" style="left:7.6px;top:44.0px;font-size:14.8px;color:#dedede">Archivo (F)</div><div class="t" style="left:93.0px;top:44.0px;font-size:14.8px;color:#dedede">Editar</div><div class="t" style="left:145.5px;top:44.0px;font-size:14.8px;color:#dedede">Vista</div><div class="t" style="left:192.0px;top:44.0px;font-size:14.8px;color:#858585">Perfil</div><div class="t" style="left:239.0px;top:44.0px;font-size:14.8px;color:#dedede">Colección de Escenas</div><div class="t" style="left:395.5px;top:44.0px;font-size:14.8px;color:#dedede">Herramientas</div><div class="t" style="left:498.5px;top:44.0px;font-size:14.8px;color:#dedede">Ayuda (H)</div><div class="b" style="left:1.0px;top:64.0px;width:912.0px;height:407.0px;background:#4c4c4c"></div><div class="pv" style="left:110px;top:73px"><div class="scr nest"><div class="dt"></div><svg class="ic" style="left:29.5px;top:93.0px" viewBox="0 0 64 64"><use href="#i-pc"/></svg><div class="lb" style="left:-18.5px;top:163.0px">Este equipo</div><svg class="ic" style="left:153.9px;top:93.0px" viewBox="0 0 64 64"><use href="#i-plant"/></svg><div class="lb" style="left:105.9px;top:163.0px">PLANTILLA</div><div class="lb" style="left:105.9px;top:184.0px">OFICIO</div><svg class="ic" style="left:278.3px;top:93.0px" viewBox="0 0 64 64"><use href="#i-xls"/></svg><div class="lb" style="left:230.3px;top:163.0px">Copia de</div><div class="lb" style="left:230.3px;top:184.0px">listadoSoloNom...</div><svg class="ic" style="left:402.7px;top:93.0px" viewBox="0 0 64 64"><use href="#i-doc"/></svg><div class="lb" style="left:354.7px;top:163.0px">Autorización</div><svg class="ic" style="left:527.1px;top:93.0px" viewBox="0 0 64 64"><use href="#i-fpdf"/></svg><div class="lb" style="left:479.1px;top:163.0px">A_A_CARMEN</div><svg class="ic" style="left:651.5px;top:93.0px" viewBox="0 0 64 64"><use href="#i-fdoc"/></svg><div class="lb" style="left:603.5px;top:163.0px">EXPT20-00038-...</div><svg class="ic" style="left:775.9px;top:93.0px" viewBox="0 0 64 64"><use href="#i-pdf"/></svg><div class="lb" style="left:727.9px;top:163.0px">Autorización</div><svg class="ic" style="left:900.3px;top:93.0px" viewBox="0 0 64 64"><use href="#i-fdark"/></svg><div class="lb" style="left:852.3px;top:163.0px">DOCUMENTACI...</div><div class="lb" style="left:852.3px;top:184.0px">CURSO</div><svg class="ic" style="left:1024.7px;top:93.0px" viewBox="0 0 64 64"><use href="#i-doc"/></svg><div class="lb" style="left:976.7px;top:163.0px">Prorroga</div><div class="lb" style="left:976.7px;top:184.0px">Servinform_20...</div><svg class="ic" style="left:1149.1px;top:93.0px" viewBox="0 0 64 64"><use href="#i-fdoc"/></svg><div class="lb" style="left:1101.1px;top:163.0px">SOBRE 1</div><svg class="ic" style="left:1397.9px;top:259.0px" viewBox="0 0 64 64"><use href="#i-fdoc"/></svg><div class="lb" style="left:1349.9px;top:329.0px">EXPT20-00067_...</div><svg class="ic" style="left:29.5px;top:259.0px" viewBox="0 0 64 64"><use href="#i-bin"/></svg><div class="lb" style="left:-18.5px;top:329.0px">Papelera de</div><div class="lb" style="left:-18.5px;top:350.0px">reciclaje</div><svg class="ic" style="left:153.9px;top:259.0px" viewBox="0 0 64 64"><use href="#i-fword"/></svg><div class="lb" style="left:105.9px;top:329.0px">MANOLO</div><svg class="ic" style="left:29.5px;top:425.0px" viewBox="0 0 64 64"><use href="#i-pdf"/></svg><div class="lb" style="left:-18.5px;top:495.0px">Configuración pie</div><div class="lb" style="left:-18.5px;top:516.0px">firma SDT 2020 ...</div><svg class="ic" style="left:153.9px;top:425.0px" viewBox="0 0 64 64"><use href="#i-cal"/></svg><div class="lb" style="left:105.9px;top:495.0px">Calendario</div><div class="lb" style="left:105.9px;top:516.0px">Licitaciones</div><svg class="ic" style="left:29.5px;top:591.0px" viewBox="0 0 64 64"><use href="#i-net"/></svg><div class="lb" style="left:-18.5px;top:661.0px">2.jur_contrat</div><svg class="ic" style="left:153.9px;top:591.0px" viewBox="0 0 64 64"><use href="#i-fplain"/></svg><div class="lb" style="left:105.9px;top:661.0px">MOVIL</div><svg class="ic" style="left:29.5px;top:757.0px" viewBox="0 0 64 64"><use href="#i-net"/></svg><div class="lb" style="left:-18.5px;top:827.0px">3.admin-financi...</div><svg class="ic" style="left:153.9px;top:757.0px" viewBox="0 0 64 64"><use href="#i-bak"/></svg><div class="lb" style="left:105.9px;top:827.0px">backup</div><svg class="ic" style="left:278.3px;top:259.0px" viewBox="0 0 64 64"><use href="#i-pdf"/></svg><div class="lbl" style="left:287.7px;top:329.0px">INICIO</div><div class="lbl" style="left:261.8px;top:350.0px">EXPT19-00</div><svg class="ic" style="left:278.3px;top:425.0px" viewBox="0 0 64 64"><use href="#i-pdf"/></svg><div class="lbl" style="left:262.8px;top:495.0px">Exp. 19-00</div><svg class="ic" style="left:278.3px;top:591.0px" viewBox="0 0 64 64"><use href="#i-pdf"/></svg><div class="lbl" style="left:276.7px;top:661.0px">20203</div><div class="lbl" style="left:256.3px;top:682.0px">Memoria</div><svg class="ic" style="left:278.3px;top:757.0px" viewBox="0 0 64 64"><use href="#i-fdoc"/></svg><div class="lbl" style="left:253.4px;top:827.0px">EXPT 20-00</div><div class="lbl" style="left:254.5px;top:848.0px">Ampliación</div><div class="obs"><div class="b" style="left:1.0px;top:1.0px;width:912.0px;height:37.0px;background:#fff"></div><svg class="ic" style="left:11.0px;top:9.0px;width:19px;height:19px;" viewBox="0 0 20 20"><use href="#i-obs"/></svg><div class="t" style="left:34.5px;top:11.8px;font-size:14.6px;color:#2e2e2e;white-space:nowrap">OBS 25.0.8 (64-bit, windows) - Perfil: Sin Título - Escenas: Sin Título</div><div class="b" style="left:760.0px;top:18.0px;width:12.0px;height:1.3px;background:#444"></div><div class="b" style="left:818.0px;top:12.5px;width:12.0px;height:12.0px;border:1.2px solid #444;box-sizing:border-box"></div><svg class="ic" style="left:877px;top:12px;width:14px;height:14px" viewBox="0 0 14 14"><path d="M1,1 L13,13 M13,1 L1,13" stroke="#444" stroke-width="1.3"/></svg><div class="b" style="left:1.0px;top:38.0px;width:912.0px;height:26.0px;background:#393939"></div><div class="t" style="left:7.6px;top:44.0px;font-size:14.8px;color:#dedede">Archivo (F)</div><div class="t" style="left:93.0px;top:44.0px;font-size:14.8px;color:#dedede">Editar</div><div class="t" style="left:145.5px;top:44.0px;font-size:14.8px;color:#dedede">Vista</div><div class="t" style="left:192.0px;top:44.0px;font-size:14.8px;color:#858585">Perfil</div><div class="t" style="left:239.0px;top:44.0px;font-size:14.8px;color:#dedede">Colección de Escenas</div><div class="t" style="left:395.5px;top:44.0px;font-size:14.8px;color:#dedede">Herramientas</div><div class="t" style="left:498.5px;top:44.0px;font-size:14.8px;color:#dedede">Ayuda (H)</div><div class="b" style="left:1.0px;top:64.0px;width:912.0px;height:407.0px;background:#4c4c4c"></div><div class="pv" style="left:110px;top:73px"><div class="scr nest"><div class="dt"></div><svg class="ic" style="left:29.5px;top:93.0px" viewBox="0 0 64 64"><use href="#i-pc"/></svg><div class="lb" style="left:-18.5px;top:163.0px">Este equipo</div><svg class="ic" style="left:153.9px;top:93.0px" viewBox="0 0 64 64"><use href="#i-plant"/></svg><div class="lb" style="left:105.9px;top:163.0px">PLANTILLA</div><div class="lb" style="left:105.9px;top:184.0px">OFICIO</div><svg class="ic" style="left:278.3px;top:93.0px" viewBox="0 0 64 64"><use href="#i-xls"/></svg><div class="lb" style="left:230.3px;top:163.0px">Copia de</div><div class="lb" style="left:230.3px;top:184.0px">listadoSoloNom...</div><svg class="ic" style="left:402.7px;top:93.0px" viewBox="0 0 64 64"><use href="#i-doc"/></svg><div class="lb" style="left:354.7px;top:163.0px">Autorización</div><svg class="ic" style="left:527.1px;top:93.0px" viewBox="0 0 64 64"><use href="#i-fpdf"/></svg><div class="lb" style="left:479.1px;top:163.0px">A_A_CARMEN</div><svg class="ic" style="left:651.5px;top:93.0px" viewBox="0 0 64 64"><use href="#i-fdoc"/></svg><div class="lb" style="left:603.5px;top:163.0px">EXPT20-00038-...</div><svg class="ic" style="left:775.9px;top:93.0px" viewBox="0 0 64 64"><use href="#i-pdf"/></svg><div class="lb" style="left:727.9px;top:163.0px">Autorización</div><svg class="ic" style="left:900.3px;top:93.0px" viewBox="0 0 64 64"><use href="#i-fdark"/></svg><div class="lb" style="left:852.3px;top:163.0px">DOCUMENTACI...</div><div class="lb" style="left:852.3px;top:184.0px">CURSO</div><svg class="ic" style="left:1024.7px;top:93.0px" viewBox="0 0 64 64"><use href="#i-doc"/></svg><div class="lb" style="left:976.7px;top:163.0px">Prorroga</div><div class="lb" style="left:976.7px;top:184.0px">Servinform_20...</div><svg class="ic" style="left:1149.1px;top:93.0px" viewBox="0 0 64 64"><use href="#i-fdoc"/></svg><div class="lb" style="left:1101.1px;top:163.0px">SOBRE 1</div><svg class="ic" style="left:1397.9px;top:259.0px" viewBox="0 0 64 64"><use href="#i-fdoc"/></svg><div class="lb" style="left:1349.9px;top:329.0px">EXPT20-00067_...</div><svg class="ic" style="left:29.5px;top:259.0px" viewBox="0 0 64 64"><use href="#i-bin"/></svg><div class="lb" style="left:-18.5px;top:329.0px">Papelera de</div><div class="lb" style="left:-18.5px;top:350.0px">reciclaje</div><svg class="ic" style="left:153.9px;top:259.0px" viewBox="0 0 64 64"><use href="#i-fword"/></svg><div class="lb" style="left:105.9px;top:329.0px">MANOLO</div><svg class="ic" style="left:29.5px;top:425.0px" viewBox="0 0 64 64"><use href="#i-pdf"/></svg><div class="lb" style="left:-18.5px;top:495.0px">Configuración pie</div><div class="lb" style="left:-18.5px;top:516.0px">firma SDT 2020 ...</div><svg class="ic" style="left:153.9px;top:425.0px" viewBox="0 0 64 64"><use href="#i-cal"/></svg><div class="lb" style="left:105.9px;top:495.0px">Calendario</div><div class="lb" style="left:105.9px;top:516.0px">Licitaciones</div><svg class="ic" style="left:29.5px;top:591.0px" viewBox="0 0 64 64"><use href="#i-net"/></svg><div class="lb" style="left:-18.5px;top:661.0px">2.jur_contrat</div><svg class="ic" style="left:153.9px;top:591.0px" viewBox="0 0 64 64"><use href="#i-fplain"/></svg><div class="lb" style="left:105.9px;top:661.0px">MOVIL</div><svg class="ic" style="left:29.5px;top:757.0px" viewBox="0 0 64 64"><use href="#i-net"/></svg><div class="lb" style="left:-18.5px;top:827.0px">3.admin-financi...</div><svg class="ic" style="left:153.9px;top:757.0px" viewBox="0 0 64 64"><use href="#i-bak"/></svg><div class="lb" style="left:105.9px;top:827.0px">backup</div><svg class="ic" style="left:278.3px;top:259.0px" viewBox="0 0 64 64"><use href="#i-pdf"/></svg><div class="lbl" style="left:287.7px;top:329.0px">INICIO</div><div class="lbl" style="left:261.8px;top:350.0px">EXPT19-00</div><svg class="ic" style="left:278.3px;top:425.0px" viewBox="0 0 64 64"><use href="#i-pdf"/></svg><div class="lbl" style="left:262.8px;top:495.0px">Exp. 19-00</div><svg class="ic" style="left:278.3px;top:591.0px" viewBox="0 0 64 64"><use href="#i-pdf"/></svg><div class="lbl" style="left:276.7px;top:661.0px">20203</div><div class="lbl" style="left:256.3px;top:682.0px">Memoria</div><svg class="ic" style="left:278.3px;top:757.0px" viewBox="0 0 64 64"><use href="#i-fdoc"/></svg><div class="lbl" style="left:253.4px;top:827.0px">EXPT 20-00</div><div class="lbl" style="left:254.5px;top:848.0px">Ampliación</div><div class="obs"><div class="b" style="left:1.0px;top:1.0px;width:912.0px;height:37.0px;background:#fff"></div><svg class="ic" style="left:11.0px;top:9.0px;width:19px;height:19px;" viewBox="0 0 20 20"><use href="#i-obs"/></svg><div class="t" style="left:34.5px;top:11.8px;font-size:14.6px;color:#2e2e2e;white-space:nowrap">OBS 25.0.8 (64-bit, windows) - Perfil: Sin Título - Escenas: Sin Título</div><div class="b" style="left:760.0px;top:18.0px;width:12.0px;height:1.3px;background:#444"></div><div class="b" style="left:818.0px;top:12.5px;width:12.0px;height:12.0px;border:1.2px solid #444;box-sizing:border-box"></div><svg class="ic" style="left:877px;top:12px;width:14px;height:14px" viewBox="0 0 14 14"><path d="M1,1 L13,13 M13,1 L1,13" stroke="#444" stroke-width="1.3"/></svg><div class="b" style="left:1.0px;top:38.0px;width:912.0px;height:26.0px;background:#393939"></div><div class="t" style="left:7.6px;top:44.0px;font-size:14.8px;color:#dedede">Archivo (F)</div><div class="t" style="left:93.0px;top:44.0px;font-size:14.8px;color:#dedede">Editar</div><div class="t" style="left:145.5px;top:44.0px;font-size:14.8px;color:#dedede">Vista</div><div class="t" style="left:192.0px;top:44.0px;font-size:14.8px;color:#858585">Perfil</div><div class="t" style="left:239.0px;top:44.0px;font-size:14.8px;color:#dedede">Colección de Escenas</div><div class="t" style="left:395.5px;top:44.0px;font-size:14.8px;color:#dedede">Herramientas</div><div class="t" style="left:498.5px;top:44.0px;font-size:14.8px;color:#dedede">Ayuda (H)</div><div class="b" style="left:1.0px;top:64.0px;width:912.0px;height:407.0px;background:#4c4c4c"></div><div class="pv" style="left:110px;top:73px"><div class="scr nest"><div class="dt"></div><svg class="ic" style="left:29.5px;top:93.0px" viewBox="0 0 64 64"><use href="#i-pc"/></svg><div class="lb" style="left:-18.5px;top:163.0px">Este equipo</div><svg class="ic" style="left:153.9px;top:93.0px" viewBox="0 0 64 64"><use href="#i-plant"/></svg><div class="lb" style="left:105.9px;top:163.0px">PLANTILLA</div><div class="lb" style="left:105.9px;top:184.0px">OFICIO</div><svg class="ic" style="left:278.3px;top:93.0px" viewBox="0 0 64 64"><use href="#i-xls"/></svg><div class="lb" style="left:230.3px;top:163.0px">Copia de</div><div class="lb" style="left:230.3px;top:184.0px">listadoSoloNom...</div><svg class="ic" style="left:402.7px;top:93.0px" viewBox="0 0 64 64"><use href="#i-doc"/></svg><div class="lb" style="left:354.7px;top:163.0px">Autorización</div><svg class="ic" style="left:527.1px;top:93.0px" viewBox="0 0 64 64"><use href="#i-fpdf"/></svg><div class="lb" style="left:479.1px;top:163.0px">A_A_CARMEN</div><svg class="ic" style="left:651.5px;top:93.0px" viewBox="0 0 64 64"><use href="#i-fdoc"/></svg><div class="lb" style="left:603.5px;top:163.0px">EXPT20-00038-...</div><svg class="ic" style="left:775.9px;top:93.0px" viewBox="0 0 64 64"><use href="#i-pdf"/></svg><div class="lb" style="left:727.9px;top:163.0px">Autorización</div><svg class="ic" style="left:900.3px;top:93.0px" viewBox="0 0 64 64"><use href="#i-fdark"/></svg><div class="lb" style="left:852.3px;top:163.0px">DOCUMENTACI...</div><div class="lb" style="left:852.3px;top:184.0px">CURSO</div><svg class="ic" style="left:1024.7px;top:93.0px" viewBox="0 0 64 64"><use href="#i-doc"/></svg><div class="lb" style="left:976.7px;top:163.0px">Prorroga</div><div class="lb" style="left:976.7px;top:184.0px">Servinform_20...</div><svg class="ic" style="left:1149.1px;top:93.0px" viewBox="0 0 64 64"><use href="#i-fdoc"/></svg><div class="lb" style="left:1101.1px;top:163.0px">SOBRE 1</div><svg class="ic" style="left:1397.9px;top:259.0px" viewBox="0 0 64 64"><use href="#i-fdoc"/></svg><div class="lb" style="left:1349.9px;top:329.0px">EXPT20-00067_...</div><svg class="ic" style="left:29.5px;top:259.0px" viewBox="0 0 64 64"><use href="#i-bin"/></svg><div class="lb" style="left:-18.5px;top:329.0px">Papelera de</div><div class="lb" style="left:-18.5px;top:350.0px">reciclaje</div><svg class="ic" style="left:153.9px;top:259.0px" viewBox="0 0 64 64"><use href="#i-fword"/></svg><div class="lb" style="left:105.9px;top:329.0px">MANOLO</div><svg class="ic" style="left:29.5px;top:425.0px" viewBox="0 0 64 64"><use href="#i-pdf"/></svg><div class="lb" style="left:-18.5px;top:495.0px">Configuración pie</div><div class="lb" style="left:-18.5px;top:516.0px">firma SDT 2020 ...</div><svg class="ic" style="left:153.9px;top:425.0px" viewBox="0 0 64 64"><use href="#i-cal"/></svg><div class="lb" style="left:105.9px;top:495.0px">Calendario</div><div class="lb" style="left:105.9px;top:516.0px">Licitaciones</div><svg class="ic" style="left:29.5px;top:591.0px" viewBox="0 0 64 64"><use href="#i-net"/></svg><div class="lb" style="left:-18.5px;top:661.0px">2.jur_contrat</div><svg class="ic" style="left:153.9px;top:591.0px" viewBox="0 0 64 64"><use href="#i-fplain"/></svg><div class="lb" style="left:105.9px;top:661.0px">MOVIL</div><svg class="ic" style="left:29.5px;top:757.0px" viewBox="0 0 64 64"><use href="#i-net"/></svg><div class="lb" style="left:-18.5px;top:827.0px">3.admin-financi...</div><svg class="ic" style="left:153.9px;top:757.0px" viewBox="0 0 64 64"><use href="#i-bak"/></svg><div class="lb" style="left:105.9px;top:827.0px">backup</div><svg class="ic" style="left:278.3px;top:259.0px" viewBox="0 0 64 64"><use href="#i-pdf"/></svg><div class="lbl" style="left:287.7px;top:329.0px">INICIO</div><div class="lbl" style="left:261.8px;top:350.0px">EXPT19-00</div><svg class="ic" style="left:278.3px;top:425.0px" viewBox="0 0 64 64"><use href="#i-pdf"/></svg><div class="lbl" style="left:262.8px;top:495.0px">Exp. 19-00</div><svg class="ic" style="left:278.3px;top:591.0px" viewBox="0 0 64 64"><use href="#i-pdf"/></svg><div class="lbl" style="left:276.7px;top:661.0px">20203</div><div class="lbl" style="left:256.3px;top:682.0px">Memoria</div><svg class="ic" style="left:278.3px;top:757.0px" viewBox="0 0 64 64"><use href="#i-fdoc"/></svg><div class="lbl" style="left:253.4px;top:827.0px">EXPT 20-00</div><div class="lbl" style="left:254.5px;top:848.0px">Ampliación</div><div class="obs"><div class="b" style="left:1.0px;top:1.0px;width:912.0px;height:37.0px;background:#fff"></div><svg class="ic" style="left:11.0px;top:9.0px;width:19px;height:19px;" viewBox="0 0 20 20"><use href="#i-obs"/></svg><div class="t" style="left:34.5px;top:11.8px;font-size:14.6px;color:#2e2e2e;white-space:nowrap">OBS 25.0.8 (64-bit, windows) - Perfil: Sin Título - Escenas: Sin Título</div><div class="b" style="left:760.0px;top:18.0px;width:12.0px;height:1.3px;background:#444"></div><div class="b" style="left:818.0px;top:12.5px;width:12.0px;height:12.0px;border:1.2px solid #444;box-sizing:border-box"></div><svg class="ic" style="left:877px;top:12px;width:14px;height:14px" viewBox="0 0 14 14"><path d="M1,1 L13,13 M13,1 L1,13" stroke="#444" stroke-width="1.3"/></svg><div class="b" style="left:1.0px;top:38.0px;width:912.0px;height:26.0px;background:#393939"></div><div class="t" style="left:7.6px;top:44.0px;font-size:14.8px;color:#dedede">Archivo (F)</div><div class="t" style="left:93.0px;top:44.0px;font-size:14.8px;color:#dedede">Editar</div><div class="t" style="left:145.5px;top:44.0px;font-size:14.8px;color:#dedede">Vista</div><div class="t" style="left:192.0px;top:44.0px;font-size:14.8px;color:#858585">Perfil</div><div class="t" style="left:239.0px;top:44.0px;font-size:14.8px;color:#dedede">Colección de Escenas</div><div class="t" style="left:395.5px;top:44.0px;font-size:14.8px;color:#dedede">Herramientas</div><div class="t" style="left:498.5px;top:44.0px;font-size:14.8px;color:#dedede">Ayuda (H)</div><div class="b" style="left:1.0px;top:64.0px;width:912.0px;height:407.0px;background:#4c4c4c"></div><div class="pv" style="left:110px;top:73px"><div style="position:absolute;left:0;top:0;width:694px;height:391px;background:#003f58"><div style="position:absolute;left:0;top:0;width:694px;height:39px;background:#000"></div></div></div><div class="b" style="left:1.0px;top:471.0px;width:912.0px;height:185.0px;background:#3a3a3a"></div><div class="b" style="left:1.0px;top:476.0px;width:142.0px;height:154.0px;background:#3c3c3c"></div><div class="b" style="left:1.0px;top:476.0px;width:142.0px;height:27.0px;background:#474747"></div><div class="t" style="left:1.0px;top:482px;width:128.0px;text-align:center;font-size:12.8px;color:#e0e0e0">Escenas</div><svg class="ic" style="left:129.0px;top:483.0px;width:14px;height:14px;" viewBox="0 0 14 14"><use href="#i-undock"/></svg><div class="b" style="left:148.0px;top:476.0px;width:145.0px;height:154.0px;background:#3c3c3c"></div><div class="b" style="left:148.0px;top:476.0px;width:145.0px;height:27.0px;background:#474747"></div><div class="t" style="left:148.0px;top:482px;width:131.0px;text-align:center;font-size:12.8px;color:#e0e0e0">Fuentes</div><svg class="ic" style="left:279.0px;top:483.0px;width:14px;height:14px;" viewBox="0 0 14 14"><use href="#i-undock"/></svg><div class="b" style="left:297.5px;top:476.0px;width:289.0px;height:154.0px;background:#3c3c3c"></div><div class="b" style="left:297.5px;top:476.0px;width:289.0px;height:27.0px;background:#474747"></div><div class="t" style="left:297.5px;top:482px;width:275.0px;text-align:center;font-size:12.8px;color:#e0e0e0">Mezclador de audio</div><svg class="ic" style="left:572.5px;top:483.0px;width:14px;height:14px;" viewBox="0 0 14 14"><use href="#i-undock"/></svg><div class="b" style="left:591.0px;top:476.0px;width:153.0px;height:154.0px;background:#3c3c3c"></div><div class="b" style="left:591.0px;top:476.0px;width:153.0px;height:27.0px;background:#474747"></div><div class="t" style="left:599.0px;top:481.0px;font-size:12.9px;color:#e0e0e0;white-space:nowrap">Transiciones de esc...</div><svg class="ic" style="left:730.0px;top:483.0px;width:14px;height:14px;" viewBox="0 0 14 14"><use href="#i-undock"/></svg><div class="b" style="left:749.0px;top:476.0px;width:163.5px;height:154.0px;background:#3c3c3c"></div><div class="b" style="left:749.0px;top:476.0px;width:163.5px;height:27.0px;background:#474747"></div><div class="t" style="left:749.0px;top:482px;width:149.5px;text-align:center;font-size:12.8px;color:#e0e0e0">Controles</div><svg class="ic" style="left:898.5px;top:483.0px;width:14px;height:14px;" viewBox="0 0 14 14"><use href="#i-undock"/></svg><div class="b" style="left:1.0px;top:503.0px;width:142.0px;height:104.0px;background:#1e1e1e"></div><div class="b" style="left:1.0px;top:503.0px;width:142.0px;height:23.0px;background:#2e2e2e"></div><div class="t" style="left:5.0px;top:508.5px;font-size:13.3px;color:#e8e8e8">Escena</div><div class="b" style="left:1.0px;top:607.0px;width:142.0px;height:22.0px;background:#3a3a3a"></div><div class="b" style="left:148.0px;top:503.0px;width:145.0px;height:104.0px;background:#1e1e1e"></div><svg class="ic" style="left:152px;top:509px;width:15px;height:13px" viewBox="0 0 15 13"><rect x="0.7" y="0.7" width="13.6" height="9" fill="none" stroke="#ddd" stroke-width="1.4"/><path d="M5,12 H10 M7.5,10 V12" stroke="#ddd" stroke-width="1.4"/></svg><div class="t" style="left:175.0px;top:508.5px;font-size:12.8px;color:#e8e8e8;width:71px;overflow:hidden;white-space:nowrap">Captura de p</div><svg class="ic" style="left:256px;top:509px;width:14px;height:10px" viewBox="0 0 14 10"><path d="M1,5 Q7,-1.5 13,5 Q7,11.5 1,5 Z" fill="none" stroke="#ddd" stroke-width="1.5"/><circle cx="7" cy="5" r="2" fill="#ddd"/></svg><svg class="ic" style="left:280px;top:507px;width:11px;height:14px" viewBox="0 0 11 14"><path d="M3,6 V4 Q3,1 5.5,1 Q8,1 8,4" fill="none" stroke="#888" stroke-width="1.5"/><rect x="0.5" y="6" width="10" height="8" fill="#888"/></svg><div class="b" style="left:148.0px;top:607.0px;width:145.0px;height:22.0px;background:#3a3a3a"></div><svg class="ic" style="left:6.0px;top:611.0px;width:14px;height:14px" viewBox="0 0 14 14"><path d="M7,0 V14 M0,7 H14" stroke="#dcdcdc" stroke-width="1.5"/></svg><svg class="ic" style="left:28.0px;top:611.0px;width:14px;height:14px" viewBox="0 0 14 14"><path d="M0,7 H14" stroke="#dcdcdc" stroke-width="1.5"/></svg><svg class="ic" style="left:58.0px;top:611.0px;width:14px;height:14px" viewBox="0 0 14 14"><path d="M1,10 L7,4 L13,10" fill="none" stroke="#dcdcdc" stroke-width="1.6"/></svg><svg class="ic" style="left:80.0px;top:611.0px;width:14px;height:14px" viewBox="0 0 14 14"><path d="M1,4 L7,10 L13,4" fill="none" stroke="#dcdcdc" stroke-width="1.6"/></svg><svg class="ic" style="left:154.0px;top:611.0px;width:14px;height:14px" viewBox="0 0 14 14"><path d="M7,0 V14 M0,7 H14" stroke="#dcdcdc" stroke-width="1.5"/></svg><svg class="ic" style="left:176.0px;top:611.0px;width:14px;height:14px" viewBox="0 0 14 14"><path d="M0,7 H14" stroke="#dcdcdc" stroke-width="1.5"/></svg><svg class="ic" style="left:198.0px;top:610.0px;width:15px;height:15px;" viewBox="0 0 20 20"><use href="#i-gear"/></svg><svg class="ic" style="left:228.0px;top:611.0px;width:14px;height:14px" viewBox="0 0 14 14"><path d="M1,10 L7,4 L13,10" fill="none" stroke="#dcdcdc" stroke-width="1.6"/></svg><svg class="ic" style="left:250.0px;top:611.0px;width:14px;height:14px" viewBox="0 0 14 14"><path d="M1,4 L7,10 L13,4" fill="none" stroke="#dcdcdc" stroke-width="1.6"/></svg><div class="b" style="left:297.5px;top:503.0px;width:289.0px;height:127.0px;background:#1e1e1e"></div><div class="b" style="left:575.0px;top:506.0px;width:8.5px;height:120.0px;background:#3a3a3a;border-radius:4px"></div><div class="t" style="left:301.0px;top:507.0px;font-size:11.4px;color:#e0e0e0">Audio del escritorio</div><div class="t" style="left:513px;top:506.0px;width:56.5px;text-align:right;font-size:11.8px;color:#e0e0e0">0.0 dB</div><div class="b" style="left:301.0px;top:522.5px;width:180.0px;height:5.5px;background:#2f6b2f"></div><div class="b" style="left:481.0px;top:522.5px;width:49.0px;height:5.5px;background:#7a7a30"></div><div class="b" style="left:530.0px;top:522.5px;width:40.0px;height:5.5px;background:#803030"></div><div class="b" style="left:306px;top:527.5px;width:260px;height:2.5px;background:repeating-linear-gradient(90deg,#8a8a8a 0 1px,transparent 1px 4.316px)"></div><div class="b" style="left:306px;top:527.0px;width:260px;height:4px;background:repeating-linear-gradient(90deg,#cfcfcf 0 1.2px,transparent 1.2px 21.58px)"></div><div class="t" style="left:296.0px;top:531.0px;width:20px;text-align:center;font-size:5.5px;line-height:6px;color:#bbb">-60</div><div class="t" style="left:317.6px;top:531.0px;width:20px;text-align:center;font-size:5.5px;line-height:6px;color:#bbb">-55</div><div class="t" style="left:339.2px;top:531.0px;width:20px;text-align:center;font-size:5.5px;line-height:6px;color:#bbb">-50</div><div class="t" style="left:360.7px;top:531.0px;width:20px;text-align:center;font-size:5.5px;line-height:6px;color:#bbb">-45</div><div class="t" style="left:382.3px;top:531.0px;width:20px;text-align:center;font-size:5.5px;line-height:6px;color:#bbb">-40</div><div class="t" style="left:403.9px;top:531.0px;width:20px;text-align:center;font-size:5.5px;line-height:6px;color:#bbb">-35</div><div class="t" style="left:425.5px;top:531.0px;width:20px;text-align:center;font-size:5.5px;line-height:6px;color:#bbb">-30</div><div class="t" style="left:447.1px;top:531.0px;width:20px;text-align:center;font-size:5.5px;line-height:6px;color:#bbb">-25</div><div class="t" style="left:468.6px;top:531.0px;width:20px;text-align:center;font-size:5.5px;line-height:6px;color:#bbb">-20</div><div class="t" style="left:490.2px;top:531.0px;width:20px;text-align:center;font-size:5.5px;line-height:6px;color:#bbb">-15</div><div class="t" style="left:511.8px;top:531.0px;width:20px;text-align:center;font-size:5.5px;line-height:6px;color:#bbb">-10</div><div class="t" style="left:533.4px;top:531.0px;width:20px;text-align:center;font-size:5.5px;line-height:6px;color:#bbb">-5</div><div class="t" style="left:555.0px;top:531.0px;width:20px;text-align:center;font-size:5.5px;line-height:6px;color:#bbb">0</div><div class="b" style="left:301.0px;top:546.0px;width:204.0px;height:4.0px;background:#2f7bd8;border-radius:2px"></div><div class="b" style="left:503.0px;top:543.5px;width:16.0px;height:9.0px;background:#d8d8d8;border-radius:2px"></div><svg class="ic" style="left:524.0px;top:540.0px;width:20px;height:16px;" viewBox="0 0 20 16"><use href="#i-spk"/></svg><svg class="ic" style="left:551.0px;top:538.5px;width:19px;height:19px;" viewBox="0 0 20 20"><use href="#i-gear"/></svg><div class="t" style="left:301.0px;top:565.5px;font-size:11.4px;color:#e0e0e0">Mic/Aux</div><div class="t" style="left:513px;top:564.5px;width:56.5px;text-align:right;font-size:11.8px;color:#e0e0e0">0.0 dB</div><div class="b" style="left:301.0px;top:581.0px;width:157.0px;height:5.5px;background:#4ac84a"></div><div class="b" style="left:458.0px;top:581.0px;width:23.0px;height:5.5px;background:#2f6b2f"></div><div class="b" style="left:301.0px;top:581.0px;width:3.0px;height:5.5px;background:#e0603a"></div><div class="b" style="left:332.0px;top:581.0px;width:1.5px;height:5.5px;background:#1e1e1e"></div><div class="b" style="left:481.0px;top:581.0px;width:49.0px;height:5.5px;background:#7a7a30"></div><div class="b" style="left:530.0px;top:581.0px;width:40.0px;height:5.5px;background:#803030"></div><div class="b" style="left:306px;top:586.0px;width:260px;height:2.5px;background:repeating-linear-gradient(90deg,#8a8a8a 0 1px,transparent 1px 4.316px)"></div><div class="b" style="left:306px;top:585.5px;width:260px;height:4px;background:repeating-linear-gradient(90deg,#cfcfcf 0 1.2px,transparent 1.2px 21.58px)"></div><div class="t" style="left:296.0px;top:589.5px;width:20px;text-align:center;font-size:5.5px;line-height:6px;color:#bbb">-60</div><div class="t" style="left:317.6px;top:589.5px;width:20px;text-align:center;font-size:5.5px;line-height:6px;color:#bbb">-55</div><div class="t" style="left:339.2px;top:589.5px;width:20px;text-align:center;font-size:5.5px;line-height:6px;color:#bbb">-50</div><div class="t" style="left:360.7px;top:589.5px;width:20px;text-align:center;font-size:5.5px;line-height:6px;color:#bbb">-45</div><div class="t" style="left:382.3px;top:589.5px;width:20px;text-align:center;font-size:5.5px;line-height:6px;color:#bbb">-40</div><div class="t" style="left:403.9px;top:589.5px;width:20px;text-align:center;font-size:5.5px;line-height:6px;color:#bbb">-35</div><div class="t" style="left:425.5px;top:589.5px;width:20px;text-align:center;font-size:5.5px;line-height:6px;color:#bbb">-30</div><div class="t" style="left:447.1px;top:589.5px;width:20px;text-align:center;font-size:5.5px;line-height:6px;color:#bbb">-25</div><div class="t" style="left:468.6px;top:589.5px;width:20px;text-align:center;font-size:5.5px;line-height:6px;color:#bbb">-20</div><div class="t" style="left:490.2px;top:589.5px;width:20px;text-align:center;font-size:5.5px;line-height:6px;color:#bbb">-15</div><div class="t" style="left:511.8px;top:589.5px;width:20px;text-align:center;font-size:5.5px;line-height:6px;color:#bbb">-10</div><div class="t" style="left:533.4px;top:589.5px;width:20px;text-align:center;font-size:5.5px;line-height:6px;color:#bbb">-5</div><div class="t" style="left:555.0px;top:589.5px;width:20px;text-align:center;font-size:5.5px;line-height:6px;color:#bbb">0</div><div class="b" style="left:301.0px;top:604.5px;width:204.0px;height:4.0px;background:#2f7bd8;border-radius:2px"></div><div class="b" style="left:503.0px;top:602.0px;width:16.0px;height:9.0px;background:#d8d8d8;border-radius:2px"></div><svg class="ic" style="left:524.0px;top:598.5px;width:20px;height:16px;" viewBox="0 0 20 16"><use href="#i-spk"/></svg><svg class="ic" style="left:551.0px;top:597.0px;width:19px;height:19px;" viewBox="0 0 20 20"><use href="#i-gear"/></svg><div class="b" style="left:594.5px;top:506.0px;width:146.0px;height:21.0px;background:#474747;border-radius:2px"></div><div class="b" style="left:722.5px;top:506.0px;width:1.0px;height:21.0px;background:#3a3a3a"></div><div class="t" style="left:602.0px;top:508.0px;font-size:13px;color:#e0e0e0">Desvanecimiento</div><svg class="ic" style="left:726px;top:510px;width:10px;height:13px" viewBox="0 0 10 13"><path d="M2,5 L5,2 L8,5 M2,8 L5,11 L8,8" fill="none" stroke="#aaa" stroke-width="1"/></svg><svg class="ic" style="left:678.0px;top:528.5px;width:19px;height:19px" viewBox="0 0 14 14"><path d="M7,0 V14 M0,7 H14" stroke="#e0e0e0" stroke-width="2"/></svg><svg class="ic" style="left:700.0px;top:528.5px;width:19px;height:19px" viewBox="0 0 14 14"><path d="M0,7 H14" stroke="#e0e0e0" stroke-width="2"/></svg><svg class="ic" style="left:721.0px;top:528.0px;width:20px;height:20px;" viewBox="0 0 20 20"><use href="#i-gear"/></svg><div class="t" style="left:594.0px;top:552.0px;font-size:13.2px;color:#e0e0e0">Duración</div><div class="b" style="left:651.5px;top:549.5px;width:75.0px;height:21.5px;background:#1c1c1c"></div><div class="t" style="left:658.0px;top:551.5px;font-size:13.5px;color:#eee">300 ms</div><div class="b" style="left:727.0px;top:549.5px;width:14.0px;height:21.5px;background:#3f3f3f"></div><svg class="ic" style="left:727px;top:550px;width:14px;height:21px" viewBox="0 0 14 21"><path d="M2,8 L7,3 L12,8 M2,13 L7,18 L12,13" fill="none" stroke="#ccc" stroke-width="1.4"/></svg><div class="t" style="left:752.4000000000001px;top:505.9px;width:157px;height:23px;line-height:23px;text-align:center;font-size:13.2px;color:#e0e0e0;background:#777777;border-radius:2px"></div><div class="t" style="left:752.4000000000001px;top:530.9px;width:157px;height:23px;line-height:23px;text-align:center;font-size:13.2px;color:#e0e0e0;background:#707070;border-radius:2px">Detener grabación</div><div class="t" style="left:752.4000000000001px;top:555.0px;width:157px;height:23px;line-height:23px;text-align:center;font-size:13.2px;color:#e0e0e0;background:#474747;border-radius:2px">Modo de estudio</div><div class="t" style="left:752.4000000000001px;top:579.5px;width:157px;height:23px;line-height:23px;text-align:center;font-size:13.2px;color:#e0e0e0;background:#474747;border-radius:2px">Ajustes</div><div class="t" style="left:752.4000000000001px;top:604.0px;width:157px;height:23px;line-height:23px;text-align:center;font-size:13.2px;color:#e0e0e0;background:#474747;border-radius:2px">Salir</div><svg class="ic" style="left:786px;top:516px;width:14px;height:20px" viewBox="0 0 14 20"><path d="M1,1 V16 L4.5,12.5 L7,18.5 L9.5,17.5 L7,11.5 H12 Z" fill="#fff" stroke="#222" stroke-width="1"/></svg><svg class="ic" style="left:453px;top:636px;width:18px;height:14px" viewBox="0 0 18 14"><circle cx="9" cy="7" r="2.3" fill="#aaa"/><path d="M5.5,3.5 Q3.5,7 5.5,10.5 M12.5,3.5 Q14.5,7 12.5,10.5 M3,1.5 Q0,7 3,12.5 M15,1.5 Q18,7 15,12.5" stroke="#aaa" stroke-width="1.3" fill="none"/></svg><div class="t" style="left:474.5px;top:636.0px;font-size:14.1px;color:#e0e0e0">LIVE: 00:00:00</div><div class="b" style="left:578.0px;top:640.0px;width:8.0px;height:8.0px;background:#e8180c;border-radius:50%"></div><div class="t" style="left:595.0px;top:636.0px;font-size:13.7px;color:#e0e0e0">REC: 00:00:00</div><div class="t" style="left:706.7px;top:636.0px;font-size:13.8px;color:#e0e0e0">CPU: 1.2%, 30.00 fps</div></div></div></div><div class="b" style="left:1.0px;top:471.0px;width:912.0px;height:185.0px;background:#3a3a3a"></div><div class="b" style="left:1.0px;top:476.0px;width:142.0px;height:154.0px;background:#3c3c3c"></div><div class="b" style="left:1.0px;top:476.0px;width:142.0px;height:27.0px;background:#474747"></div><div class="t" style="left:1.0px;top:482px;width:128.0px;text-align:center;font-size:12.8px;color:#e0e0e0">Escenas</div><svg class="ic" style="left:129.0px;top:483.0px;width:14px;height:14px;" viewBox="0 0 14 14"><use href="#i-undock"/></svg><div class="b" style="left:148.0px;top:476.0px;width:145.0px;height:154.0px;background:#3c3c3c"></div><div class="b" style="left:148.0px;top:476.0px;width:145.0px;height:27.0px;background:#474747"></div><div class="t" style="left:148.0px;top:482px;width:131.0px;text-align:center;font-size:12.8px;color:#e0e0e0">Fuentes</div><svg class="ic" style="left:279.0px;top:483.0px;width:14px;height:14px;" viewBox="0 0 14 14"><use href="#i-undock"/></svg><div class="b" style="left:297.5px;top:476.0px;width:289.0px;height:154.0px;background:#3c3c3c"></div><div class="b" style="left:297.5px;top:476.0px;width:289.0px;height:27.0px;background:#474747"></div><div class="t" style="left:297.5px;top:482px;width:275.0px;text-align:center;font-size:12.8px;color:#e0e0e0">Mezclador de audio</div><svg class="ic" style="left:572.5px;top:483.0px;width:14px;height:14px;" viewBox="0 0 14 14"><use href="#i-undock"/></svg><div class="b" style="left:591.0px;top:476.0px;width:153.0px;height:154.0px;background:#3c3c3c"></div><div class="b" style="left:591.0px;top:476.0px;width:153.0px;height:27.0px;background:#474747"></div><div class="t" style="left:599.0px;top:481.0px;font-size:12.9px;color:#e0e0e0;white-space:nowrap">Transiciones de esc...</div><svg class="ic" style="left:730.0px;top:483.0px;width:14px;height:14px;" viewBox="0 0 14 14"><use href="#i-undock"/></svg><div class="b" style="left:749.0px;top:476.0px;width:163.5px;height:154.0px;background:#3c3c3c"></div><div class="b" style="left:749.0px;top:476.0px;width:163.5px;height:27.0px;background:#474747"></div><div class="t" style="left:749.0px;top:482px;width:149.5px;text-align:center;font-size:12.8px;color:#e0e0e0">Controles</div><svg class="ic" style="left:898.5px;top:483.0px;width:14px;height:14px;" viewBox="0 0 14 14"><use href="#i-undock"/></svg><div class="b" style="left:1.0px;top:503.0px;width:142.0px;height:104.0px;background:#1e1e1e"></div><div class="b" style="left:1.0px;top:503.0px;width:142.0px;height:23.0px;background:#2e2e2e"></div><div class="t" style="left:5.0px;top:508.5px;font-size:13.3px;color:#e8e8e8">Escena</div><div class="b" style="left:1.0px;top:607.0px;width:142.0px;height:22.0px;background:#3a3a3a"></div><div class="b" style="left:148.0px;top:503.0px;width:145.0px;height:104.0px;background:#1e1e1e"></div><svg class="ic" style="left:152px;top:509px;width:15px;height:13px" viewBox="0 0 15 13"><rect x="0.7" y="0.7" width="13.6" height="9" fill="none" stroke="#ddd" stroke-width="1.4"/><path d="M5,12 H10 M7.5,10 V12" stroke="#ddd" stroke-width="1.4"/></svg><div class="t" style="left:175.0px;top:508.5px;font-size:12.8px;color:#e8e8e8;width:71px;overflow:hidden;white-space:nowrap">Captura de p</div><svg class="ic" style="left:256px;top:509px;width:14px;height:10px" viewBox="0 0 14 10"><path d="M1,5 Q7,-1.5 13,5 Q7,11.5 1,5 Z" fill="none" stroke="#ddd" stroke-width="1.5"/><circle cx="7" cy="5" r="2" fill="#ddd"/></svg><svg class="ic" style="left:280px;top:507px;width:11px;height:14px" viewBox="0 0 11 14"><path d="M3,6 V4 Q3,1 5.5,1 Q8,1 8,4" fill="none" stroke="#888" stroke-width="1.5"/><rect x="0.5" y="6" width="10" height="8" fill="#888"/></svg><div class="b" style="left:148.0px;top:607.0px;width:145.0px;height:22.0px;background:#3a3a3a"></div><svg class="ic" style="left:6.0px;top:611.0px;width:14px;height:14px" viewBox="0 0 14 14"><path d="M7,0 V14 M0,7 H14" stroke="#dcdcdc" stroke-width="1.5"/></svg><svg class="ic" style="left:28.0px;top:611.0px;width:14px;height:14px" viewBox="0 0 14 14"><path d="M0,7 H14" stroke="#dcdcdc" stroke-width="1.5"/></svg><svg class="ic" style="left:58.0px;top:611.0px;width:14px;height:14px" viewBox="0 0 14 14"><path d="M1,10 L7,4 L13,10" fill="none" stroke="#dcdcdc" stroke-width="1.6"/></svg><svg class="ic" style="left:80.0px;top:611.0px;width:14px;height:14px" viewBox="0 0 14 14"><path d="M1,4 L7,10 L13,4" fill="none" stroke="#dcdcdc" stroke-width="1.6"/></svg><svg class="ic" style="left:154.0px;top:611.0px;width:14px;height:14px" viewBox="0 0 14 14"><path d="M7,0 V14 M0,7 H14" stroke="#dcdcdc" stroke-width="1.5"/></svg><svg class="ic" style="left:176.0px;top:611.0px;width:14px;height:14px" viewBox="0 0 14 14"><path d="M0,7 H14" stroke="#dcdcdc" stroke-width="1.5"/></svg><svg class="ic" style="left:198.0px;top:610.0px;width:15px;height:15px;" viewBox="0 0 20 20"><use href="#i-gear"/></svg><svg class="ic" style="left:228.0px;top:611.0px;width:14px;height:14px" viewBox="0 0 14 14"><path d="M1,10 L7,4 L13,10" fill="none" stroke="#dcdcdc" stroke-width="1.6"/></svg><svg class="ic" style="left:250.0px;top:611.0px;width:14px;height:14px" viewBox="0 0 14 14"><path d="M1,4 L7,10 L13,4" fill="none" stroke="#dcdcdc" stroke-width="1.6"/></svg><div class="b" style="left:297.5px;top:503.0px;width:289.0px;height:127.0px;background:#1e1e1e"></div><div class="b" style="left:575.0px;top:506.0px;width:8.5px;height:120.0px;background:#3a3a3a;border-radius:4px"></div><div class="t" style="left:301.0px;top:507.0px;font-size:11.4px;color:#e0e0e0">Audio del escritorio</div><div class="t" style="left:513px;top:506.0px;width:56.5px;text-align:right;font-size:11.8px;color:#e0e0e0">0.0 dB</div><div class="b" style="left:301.0px;top:522.5px;width:180.0px;height:5.5px;background:#2f6b2f"></div><div class="b" style="left:481.0px;top:522.5px;width:49.0px;height:5.5px;background:#7a7a30"></div><div class="b" style="left:530.0px;top:522.5px;width:40.0px;height:5.5px;background:#803030"></div><div class="b" style="left:306px;top:527.5px;width:260px;height:2.5px;background:repeating-linear-gradient(90deg,#8a8a8a 0 1px,transparent 1px 4.316px)"></div><div class="b" style="left:306px;top:527.0px;width:260px;height:4px;background:repeating-linear-gradient(90deg,#cfcfcf 0 1.2px,transparent 1.2px 21.58px)"></div><div class="t" style="left:296.0px;top:531.0px;width:20px;text-align:center;font-size:5.5px;line-height:6px;color:#bbb">-60</div><div class="t" style="left:317.6px;top:531.0px;width:20px;text-align:center;font-size:5.5px;line-height:6px;color:#bbb">-55</div><div class="t" style="left:339.2px;top:531.0px;width:20px;text-align:center;font-size:5.5px;line-height:6px;color:#bbb">-50</div><div class="t" style="left:360.7px;top:531.0px;width:20px;text-align:center;font-size:5.5px;line-height:6px;color:#bbb">-45</div><div class="t" style="left:382.3px;top:531.0px;width:20px;text-align:center;font-size:5.5px;line-height:6px;color:#bbb">-40</div><div class="t" style="left:403.9px;top:531.0px;width:20px;text-align:center;font-size:5.5px;line-height:6px;color:#bbb">-35</div><div class="t" style="left:425.5px;top:531.0px;width:20px;text-align:center;font-size:5.5px;line-height:6px;color:#bbb">-30</div><div class="t" style="left:447.1px;top:531.0px;width:20px;text-align:center;font-size:5.5px;line-height:6px;color:#bbb">-25</div><div class="t" style="left:468.6px;top:531.0px;width:20px;text-align:center;font-size:5.5px;line-height:6px;color:#bbb">-20</div><div class="t" style="left:490.2px;top:531.0px;width:20px;text-align:center;font-size:5.5px;line-height:6px;color:#bbb">-15</div><div class="t" style="left:511.8px;top:531.0px;width:20px;text-align:center;font-size:5.5px;line-height:6px;color:#bbb">-10</div><div class="t" style="left:533.4px;top:531.0px;width:20px;text-align:center;font-size:5.5px;line-height:6px;color:#bbb">-5</div><div class="t" style="left:555.0px;top:531.0px;width:20px;text-align:center;font-size:5.5px;line-height:6px;color:#bbb">0</div><div class="b" style="left:301.0px;top:546.0px;width:204.0px;height:4.0px;background:#2f7bd8;border-radius:2px"></div><div class="b" style="left:503.0px;top:543.5px;width:16.0px;height:9.0px;background:#d8d8d8;border-radius:2px"></div><svg class="ic" style="left:524.0px;top:540.0px;width:20px;height:16px;" viewBox="0 0 20 16"><use href="#i-spk"/></svg><svg class="ic" style="left:551.0px;top:538.5px;width:19px;height:19px;" viewBox="0 0 20 20"><use href="#i-gear"/></svg><div class="t" style="left:301.0px;top:565.5px;font-size:11.4px;color:#e0e0e0">Mic/Aux</div><div class="t" style="left:513px;top:564.5px;width:56.5px;text-align:right;font-size:11.8px;color:#e0e0e0">0.0 dB</div><div class="b" style="left:301.0px;top:581.0px;width:157.0px;height:5.5px;background:#4ac84a"></div><div class="b" style="left:458.0px;top:581.0px;width:23.0px;height:5.5px;background:#2f6b2f"></div><div class="b" style="left:301.0px;top:581.0px;width:3.0px;height:5.5px;background:#e0603a"></div><div class="b" style="left:332.0px;top:581.0px;width:1.5px;height:5.5px;background:#1e1e1e"></div><div class="b" style="left:481.0px;top:581.0px;width:49.0px;height:5.5px;background:#7a7a30"></div><div class="b" style="left:530.0px;top:581.0px;width:40.0px;height:5.5px;background:#803030"></div><div class="b" style="left:306px;top:586.0px;width:260px;height:2.5px;background:repeating-linear-gradient(90deg,#8a8a8a 0 1px,transparent 1px 4.316px)"></div><div class="b" style="left:306px;top:585.5px;width:260px;height:4px;background:repeating-linear-gradient(90deg,#cfcfcf 0 1.2px,transparent 1.2px 21.58px)"></div><div class="t" style="left:296.0px;top:589.5px;width:20px;text-align:center;font-size:5.5px;line-height:6px;color:#bbb">-60</div><div class="t" style="left:317.6px;top:589.5px;width:20px;text-align:center;font-size:5.5px;line-height:6px;color:#bbb">-55</div><div class="t" style="left:339.2px;top:589.5px;width:20px;text-align:center;font-size:5.5px;line-height:6px;color:#bbb">-50</div><div class="t" style="left:360.7px;top:589.5px;width:20px;text-align:center;font-size:5.5px;line-height:6px;color:#bbb">-45</div><div class="t" style="left:382.3px;top:589.5px;width:20px;text-align:center;font-size:5.5px;line-height:6px;color:#bbb">-40</div><div class="t" style="left:403.9px;top:589.5px;width:20px;text-align:center;font-size:5.5px;line-height:6px;color:#bbb">-35</div><div class="t" style="left:425.5px;top:589.5px;width:20px;text-align:center;font-size:5.5px;line-height:6px;color:#bbb">-30</div><div class="t" style="left:447.1px;top:589.5px;width:20px;text-align:center;font-size:5.5px;line-height:6px;color:#bbb">-25</div><div class="t" style="left:468.6px;top:589.5px;width:20px;text-align:center;font-size:5.5px;line-height:6px;color:#bbb">-20</div><div class="t" style="left:490.2px;top:589.5px;width:20px;text-align:center;font-size:5.5px;line-height:6px;color:#bbb">-15</div><div class="t" style="left:511.8px;top:589.5px;width:20px;text-align:center;font-size:5.5px;line-height:6px;color:#bbb">-10</div><div class="t" style="left:533.4px;top:589.5px;width:20px;text-align:center;font-size:5.5px;line-height:6px;color:#bbb">-5</div><div class="t" style="left:555.0px;top:589.5px;width:20px;text-align:center;font-size:5.5px;line-height:6px;color:#bbb">0</div><div class="b" style="left:301.0px;top:604.5px;width:204.0px;height:4.0px;background:#2f7bd8;border-radius:2px"></div><div class="b" style="left:503.0px;top:602.0px;width:16.0px;height:9.0px;background:#d8d8d8;border-radius:2px"></div><svg class="ic" style="left:524.0px;top:598.5px;width:20px;height:16px;" viewBox="0 0 20 16"><use href="#i-spk"/></svg><svg class="ic" style="left:551.0px;top:597.0px;width:19px;height:19px;" viewBox="0 0 20 20"><use href="#i-gear"/></svg><div class="b" style="left:594.5px;top:506.0px;width:146.0px;height:21.0px;background:#474747;border-radius:2px"></div><div class="b" style="left:722.5px;top:506.0px;width:1.0px;height:21.0px;background:#3a3a3a"></div><div class="t" style="left:602.0px;top:508.0px;font-size:13px;color:#e0e0e0">Desvanecimiento</div><svg class="ic" style="left:726px;top:510px;width:10px;height:13px" viewBox="0 0 10 13"><path d="M2,5 L5,2 L8,5 M2,8 L5,11 L8,8" fill="none" stroke="#aaa" stroke-width="1"/></svg><svg class="ic" style="left:678.0px;top:528.5px;width:19px;height:19px" viewBox="0 0 14 14"><path d="M7,0 V14 M0,7 H14" stroke="#e0e0e0" stroke-width="2"/></svg><svg class="ic" style="left:700.0px;top:528.5px;width:19px;height:19px" viewBox="0 0 14 14"><path d="M0,7 H14" stroke="#e0e0e0" stroke-width="2"/></svg><svg class="ic" style="left:721.0px;top:528.0px;width:20px;height:20px;" viewBox="0 0 20 20"><use href="#i-gear"/></svg><div class="t" style="left:594.0px;top:552.0px;font-size:13.2px;color:#e0e0e0">Duración</div><div class="b" style="left:651.5px;top:549.5px;width:75.0px;height:21.5px;background:#1c1c1c"></div><div class="t" style="left:658.0px;top:551.5px;font-size:13.5px;color:#eee">300 ms</div><div class="b" style="left:727.0px;top:549.5px;width:14.0px;height:21.5px;background:#3f3f3f"></div><svg class="ic" style="left:727px;top:550px;width:14px;height:21px" viewBox="0 0 14 21"><path d="M2,8 L7,3 L12,8 M2,13 L7,18 L12,13" fill="none" stroke="#ccc" stroke-width="1.4"/></svg><div class="t" style="left:752.4000000000001px;top:505.9px;width:157px;height:23px;line-height:23px;text-align:center;font-size:13.2px;color:#e0e0e0;background:#777777;border-radius:2px"></div><div class="t" style="left:752.4000000000001px;top:530.9px;width:157px;height:23px;line-height:23px;text-align:center;font-size:13.2px;color:#e0e0e0;background:#707070;border-radius:2px">Detener grabación</div><div class="t" style="left:752.4000000000001px;top:555.0px;width:157px;height:23px;line-height:23px;text-align:center;font-size:13.2px;color:#e0e0e0;background:#474747;border-radius:2px">Modo de estudio</div><div class="t" style="left:752.4000000000001px;top:579.5px;width:157px;height:23px;line-height:23px;text-align:center;font-size:13.2px;color:#e0e0e0;background:#474747;border-radius:2px">Ajustes</div><div class="t" style="left:752.4000000000001px;top:604.0px;width:157px;height:23px;line-height:23px;text-align:center;font-size:13.2px;color:#e0e0e0;background:#474747;border-radius:2px">Salir</div><svg class="ic" style="left:786px;top:516px;width:14px;height:20px" viewBox="0 0 14 20"><path d="M1,1 V16 L4.5,12.5 L7,18.5 L9.5,17.5 L7,11.5 H12 Z" fill="#fff" stroke="#222" stroke-width="1"/></svg><svg class="ic" style="left:453px;top:636px;width:18px;height:14px" viewBox="0 0 18 14"><circle cx="9" cy="7" r="2.3" fill="#aaa"/><path d="M5.5,3.5 Q3.5,7 5.5,10.5 M12.5,3.5 Q14.5,7 12.5,10.5 M3,1.5 Q0,7 3,12.5 M15,1.5 Q18,7 15,12.5" stroke="#aaa" stroke-width="1.3" fill="none"/></svg><div class="t" style="left:474.5px;top:636.0px;font-size:14.1px;color:#e0e0e0">LIVE: 00:00:00</div><div class="b" style="left:578.0px;top:640.0px;width:8.0px;height:8.0px;background:#e8180c;border-radius:50%"></div><div class="t" style="left:595.0px;top:636.0px;font-size:13.7px;color:#e0e0e0">REC: 00:00:00</div><div class="t" style="left:706.7px;top:636.0px;font-size:13.8px;color:#e0e0e0">CPU: 1.2%, 30.00 fps</div></div></div></div><div class="b" style="left:1.0px;top:471.0px;width:912.0px;height:185.0px;background:#3a3a3a"></div><div class="b" style="left:1.0px;top:476.0px;width:142.0px;height:154.0px;background:#3c3c3c"></div><div class="b" style="left:1.0px;top:476.0px;width:142.0px;height:27.0px;background:#474747"></div><div class="t" style="left:1.0px;top:482px;width:128.0px;text-align:center;font-size:12.8px;color:#e0e0e0">Escenas</div><svg class="ic" style="left:129.0px;top:483.0px;width:14px;height:14px;" viewBox="0 0 14 14"><use href="#i-undock"/></svg><div class="b" style="left:148.0px;top:476.0px;width:145.0px;height:154.0px;background:#3c3c3c"></div><div class="b" style="left:148.0px;top:476.0px;width:145.0px;height:27.0px;background:#474747"></div><div class="t" style="left:148.0px;top:482px;width:131.0px;text-align:center;font-size:12.8px;color:#e0e0e0">Fuentes</div><svg class="ic" style="left:279.0px;top:483.0px;width:14px;height:14px;" viewBox="0 0 14 14"><use href="#i-undock"/></svg><div class="b" style="left:297.5px;top:476.0px;width:289.0px;height:154.0px;background:#3c3c3c"></div><div class="b" style="left:297.5px;top:476.0px;width:289.0px;height:27.0px;background:#474747"></div><div class="t" style="left:297.5px;top:482px;width:275.0px;text-align:center;font-size:12.8px;color:#e0e0e0">Mezclador de audio</div><svg class="ic" style="left:572.5px;top:483.0px;width:14px;height:14px;" viewBox="0 0 14 14"><use href="#i-undock"/></svg><div class="b" style="left:591.0px;top:476.0px;width:153.0px;height:154.0px;background:#3c3c3c"></div><div class="b" style="left:591.0px;top:476.0px;width:153.0px;height:27.0px;background:#474747"></div><div class="t" style="left:599.0px;top:481.0px;font-size:12.9px;color:#e0e0e0;white-space:nowrap">Transiciones de esc...</div><svg class="ic" style="left:730.0px;top:483.0px;width:14px;height:14px;" viewBox="0 0 14 14"><use href="#i-undock"/></svg><div class="b" style="left:749.0px;top:476.0px;width:163.5px;height:154.0px;background:#3c3c3c"></div><div class="b" style="left:749.0px;top:476.0px;width:163.5px;height:27.0px;background:#474747"></div><div class="t" style="left:749.0px;top:482px;width:149.5px;text-align:center;font-size:12.8px;color:#e0e0e0">Controles</div><svg class="ic" style="left:898.5px;top:483.0px;width:14px;height:14px;" viewBox="0 0 14 14"><use href="#i-undock"/></svg><div class="b" style="left:1.0px;top:503.0px;width:142.0px;height:104.0px;background:#1e1e1e"></div><div class="b" style="left:1.0px;top:503.0px;width:142.0px;height:23.0px;background:#2e2e2e"></div><div class="t" style="left:5.0px;top:508.5px;font-size:13.3px;color:#e8e8e8">Escena</div><div class="b" style="left:1.0px;top:607.0px;width:142.0px;height:22.0px;background:#3a3a3a"></div><div class="b" style="left:148.0px;top:503.0px;width:145.0px;height:104.0px;background:#1e1e1e"></div><svg class="ic" style="left:152px;top:509px;width:15px;height:13px" viewBox="0 0 15 13"><rect x="0.7" y="0.7" width="13.6" height="9" fill="none" stroke="#ddd" stroke-width="1.4"/><path d="M5,12 H10 M7.5,10 V12" stroke="#ddd" stroke-width="1.4"/></svg><div class="t" style="left:175.0px;top:508.5px;font-size:12.8px;color:#e8e8e8;width:71px;overflow:hidden;white-space:nowrap">Captura de p</div><svg class="ic" style="left:256px;top:509px;width:14px;height:10px" viewBox="0 0 14 10"><path d="M1,5 Q7,-1.5 13,5 Q7,11.5 1,5 Z" fill="none" stroke="#ddd" stroke-width="1.5"/><circle cx="7" cy="5" r="2" fill="#ddd"/></svg><svg class="ic" style="left:280px;top:507px;width:11px;height:14px" viewBox="0 0 11 14"><path d="M3,6 V4 Q3,1 5.5,1 Q8,1 8,4" fill="none" stroke="#888" stroke-width="1.5"/><rect x="0.5" y="6" width="10" height="8" fill="#888"/></svg><div class="b" style="left:148.0px;top:607.0px;width:145.0px;height:22.0px;background:#3a3a3a"></div><svg class="ic" style="left:6.0px;top:611.0px;width:14px;height:14px" viewBox="0 0 14 14"><path d="M7,0 V14 M0,7 H14" stroke="#dcdcdc" stroke-width="1.5"/></svg><svg class="ic" style="left:28.0px;top:611.0px;width:14px;height:14px" viewBox="0 0 14 14"><path d="M0,7 H14" stroke="#dcdcdc" stroke-width="1.5"/></svg><svg class="ic" style="left:58.0px;top:611.0px;width:14px;height:14px" viewBox="0 0 14 14"><path d="M1,10 L7,4 L13,10" fill="none" stroke="#dcdcdc" stroke-width="1.6"/></svg><svg class="ic" style="left:80.0px;top:611.0px;width:14px;height:14px" viewBox="0 0 14 14"><path d="M1,4 L7,10 L13,4" fill="none" stroke="#dcdcdc" stroke-width="1.6"/></svg><svg class="ic" style="left:154.0px;top:611.0px;width:14px;height:14px" viewBox="0 0 14 14"><path d="M7,0 V14 M0,7 H14" stroke="#dcdcdc" stroke-width="1.5"/></svg><svg class="ic" style="left:176.0px;top:611.0px;width:14px;height:14px" viewBox="0 0 14 14"><path d="M0,7 H14" stroke="#dcdcdc" stroke-width="1.5"/></svg><svg class="ic" style="left:198.0px;top:610.0px;width:15px;height:15px;" viewBox="0 0 20 20"><use href="#i-gear"/></svg><svg class="ic" style="left:228.0px;top:611.0px;width:14px;height:14px" viewBox="0 0 14 14"><path d="M1,10 L7,4 L13,10" fill="none" stroke="#dcdcdc" stroke-width="1.6"/></svg><svg class="ic" style="left:250.0px;top:611.0px;width:14px;height:14px" viewBox="0 0 14 14"><path d="M1,4 L7,10 L13,4" fill="none" stroke="#dcdcdc" stroke-width="1.6"/></svg><div class="b" style="left:297.5px;top:503.0px;width:289.0px;height:127.0px;background:#1e1e1e"></div><div class="b" style="left:575.0px;top:506.0px;width:8.5px;height:120.0px;background:#3a3a3a;border-radius:4px"></div><div class="t" style="left:301.0px;top:507.0px;font-size:11.4px;color:#e0e0e0">Audio del escritorio</div><div class="t" style="left:513px;top:506.0px;width:56.5px;text-align:right;font-size:11.8px;color:#e0e0e0">0.0 dB</div><div class="b" style="left:301.0px;top:522.5px;width:180.0px;height:5.5px;background:#2f6b2f"></div><div class="b" style="left:481.0px;top:522.5px;width:49.0px;height:5.5px;background:#7a7a30"></div><div class="b" style="left:530.0px;top:522.5px;width:40.0px;height:5.5px;background:#803030"></div><div class="b" style="left:306px;top:527.5px;width:260px;height:2.5px;background:repeating-linear-gradient(90deg,#8a8a8a 0 1px,transparent 1px 4.316px)"></div><div class="b" style="left:306px;top:527.0px;width:260px;height:4px;background:repeating-linear-gradient(90deg,#cfcfcf 0 1.2px,transparent 1.2px 21.58px)"></div><div class="t" style="left:296.0px;top:531.0px;width:20px;text-align:center;font-size:5.5px;line-height:6px;color:#bbb">-60</div><div class="t" style="left:317.6px;top:531.0px;width:20px;text-align:center;font-size:5.5px;line-height:6px;color:#bbb">-55</div><div class="t" style="left:339.2px;top:531.0px;width:20px;text-align:center;font-size:5.5px;line-height:6px;color:#bbb">-50</div><div class="t" style="left:360.7px;top:531.0px;width:20px;text-align:center;font-size:5.5px;line-height:6px;color:#bbb">-45</div><div class="t" style="left:382.3px;top:531.0px;width:20px;text-align:center;font-size:5.5px;line-height:6px;color:#bbb">-40</div><div class="t" style="left:403.9px;top:531.0px;width:20px;text-align:center;font-size:5.5px;line-height:6px;color:#bbb">-35</div><div class="t" style="left:425.5px;top:531.0px;width:20px;text-align:center;font-size:5.5px;line-height:6px;color:#bbb">-30</div><div class="t" style="left:447.1px;top:531.0px;width:20px;text-align:center;font-size:5.5px;line-height:6px;color:#bbb">-25</div><div class="t" style="left:468.6px;top:531.0px;width:20px;text-align:center;font-size:5.5px;line-height:6px;color:#bbb">-20</div><div class="t" style="left:490.2px;top:531.0px;width:20px;text-align:center;font-size:5.5px;line-height:6px;color:#bbb">-15</div><div class="t" style="left:511.8px;top:531.0px;width:20px;text-align:center;font-size:5.5px;line-height:6px;color:#bbb">-10</div><div class="t" style="left:533.4px;top:531.0px;width:20px;text-align:center;font-size:5.5px;line-height:6px;color:#bbb">-5</div><div class="t" style="left:555.0px;top:531.0px;width:20px;text-align:center;font-size:5.5px;line-height:6px;color:#bbb">0</div><div class="b" style="left:301.0px;top:546.0px;width:204.0px;height:4.0px;background:#2f7bd8;border-radius:2px"></div><div class="b" style="left:503.0px;top:543.5px;width:16.0px;height:9.0px;background:#d8d8d8;border-radius:2px"></div><svg class="ic" style="left:524.0px;top:540.0px;width:20px;height:16px;" viewBox="0 0 20 16"><use href="#i-spk"/></svg><svg class="ic" style="left:551.0px;top:538.5px;width:19px;height:19px;" viewBox="0 0 20 20"><use href="#i-gear"/></svg><div class="t" style="left:301.0px;top:565.5px;font-size:11.4px;color:#e0e0e0">Mic/Aux</div><div class="t" style="left:513px;top:564.5px;width:56.5px;text-align:right;font-size:11.8px;color:#e0e0e0">0.0 dB</div><div class="b" style="left:301.0px;top:581.0px;width:157.0px;height:5.5px;background:#4ac84a"></div><div class="b" style="left:458.0px;top:581.0px;width:23.0px;height:5.5px;background:#2f6b2f"></div><div class="b" style="left:301.0px;top:581.0px;width:3.0px;height:5.5px;background:#e0603a"></div><div class="b" style="left:332.0px;top:581.0px;width:1.5px;height:5.5px;background:#1e1e1e"></div><div class="b" style="left:481.0px;top:581.0px;width:49.0px;height:5.5px;background:#7a7a30"></div><div class="b" style="left:530.0px;top:581.0px;width:40.0px;height:5.5px;background:#803030"></div><div class="b" style="left:306px;top:586.0px;width:260px;height:2.5px;background:repeating-linear-gradient(90deg,#8a8a8a 0 1px,transparent 1px 4.316px)"></div><div class="b" style="left:306px;top:585.5px;width:260px;height:4px;background:repeating-linear-gradient(90deg,#cfcfcf 0 1.2px,transparent 1.2px 21.58px)"></div><div class="t" style="left:296.0px;top:589.5px;width:20px;text-align:center;font-size:5.5px;line-height:6px;color:#bbb">-60</div><div class="t" style="left:317.6px;top:589.5px;width:20px;text-align:center;font-size:5.5px;line-height:6px;color:#bbb">-55</div><div class="t" style="left:339.2px;top:589.5px;width:20px;text-align:center;font-size:5.5px;line-height:6px;color:#bbb">-50</div><div class="t" style="left:360.7px;top:589.5px;width:20px;text-align:center;font-size:5.5px;line-height:6px;color:#bbb">-45</div><div class="t" style="left:382.3px;top:589.5px;width:20px;text-align:center;font-size:5.5px;line-height:6px;color:#bbb">-40</div><div class="t" style="left:403.9px;top:589.5px;width:20px;text-align:center;font-size:5.5px;line-height:6px;color:#bbb">-35</div><div class="t" style="left:425.5px;top:589.5px;width:20px;text-align:center;font-size:5.5px;line-height:6px;color:#bbb">-30</div><div class="t" style="left:447.1px;top:589.5px;width:20px;text-align:center;font-size:5.5px;line-height:6px;color:#bbb">-25</div><div class="t" style="left:468.6px;top:589.5px;width:20px;text-align:center;font-size:5.5px;line-height:6px;color:#bbb">-20</div><div class="t" style="left:490.2px;top:589.5px;width:20px;text-align:center;font-size:5.5px;line-height:6px;color:#bbb">-15</div><div class="t" style="left:511.8px;top:589.5px;width:20px;text-align:center;font-size:5.5px;line-height:6px;color:#bbb">-10</div><div class="t" style="left:533.4px;top:589.5px;width:20px;text-align:center;font-size:5.5px;line-height:6px;color:#bbb">-5</div><div class="t" style="left:555.0px;top:589.5px;width:20px;text-align:center;font-size:5.5px;line-height:6px;color:#bbb">0</div><div class="b" style="left:301.0px;top:604.5px;width:204.0px;height:4.0px;background:#2f7bd8;border-radius:2px"></div><div class="b" style="left:503.0px;top:602.0px;width:16.0px;height:9.0px;background:#d8d8d8;border-radius:2px"></div><svg class="ic" style="left:524.0px;top:598.5px;width:20px;height:16px;" viewBox="0 0 20 16"><use href="#i-spk"/></svg><svg class="ic" style="left:551.0px;top:597.0px;width:19px;height:19px;" viewBox="0 0 20 20"><use href="#i-gear"/></svg><div class="b" style="left:594.5px;top:506.0px;width:146.0px;height:21.0px;background:#474747;border-radius:2px"></div><div class="b" style="left:722.5px;top:506.0px;width:1.0px;height:21.0px;background:#3a3a3a"></div><div class="t" style="left:602.0px;top:508.0px;font-size:13px;color:#e0e0e0">Desvanecimiento</div><svg class="ic" style="left:726px;top:510px;width:10px;height:13px" viewBox="0 0 10 13"><path d="M2,5 L5,2 L8,5 M2,8 L5,11 L8,8" fill="none" stroke="#aaa" stroke-width="1"/></svg><svg class="ic" style="left:678.0px;top:528.5px;width:19px;height:19px" viewBox="0 0 14 14"><path d="M7,0 V14 M0,7 H14" stroke="#e0e0e0" stroke-width="2"/></svg><svg class="ic" style="left:700.0px;top:528.5px;width:19px;height:19px" viewBox="0 0 14 14"><path d="M0,7 H14" stroke="#e0e0e0" stroke-width="2"/></svg><svg class="ic" style="left:721.0px;top:528.0px;width:20px;height:20px;" viewBox="0 0 20 20"><use href="#i-gear"/></svg><div class="t" style="left:594.0px;top:552.0px;font-size:13.2px;color:#e0e0e0">Duración</div><div class="b" style="left:651.5px;top:549.5px;width:75.0px;height:21.5px;background:#1c1c1c"></div><div class="t" style="left:658.0px;top:551.5px;font-size:13.5px;color:#eee">300 ms</div><div class="b" style="left:727.0px;top:549.5px;width:14.0px;height:21.5px;background:#3f3f3f"></div><svg class="ic" style="left:727px;top:550px;width:14px;height:21px" viewBox="0 0 14 21"><path d="M2,8 L7,3 L12,8 M2,13 L7,18 L12,13" fill="none" stroke="#ccc" stroke-width="1.4"/></svg><div class="t" style="left:752.4000000000001px;top:505.9px;width:157px;height:23px;line-height:23px;text-align:center;font-size:13.2px;color:#e0e0e0;background:#777777;border-radius:2px"></div><div class="t" style="left:752.4000000000001px;top:530.9px;width:157px;height:23px;line-height:23px;text-align:center;font-size:13.2px;color:#e0e0e0;background:#707070;border-radius:2px">Detener grabación</div><div class="t" style="left:752.4000000000001px;top:555.0px;width:157px;height:23px;line-height:23px;text-align:center;font-size:13.2px;color:#e0e0e0;background:#474747;border-radius:2px">Modo de estudio</div><div class="t" style="left:752.4000000000001px;top:579.5px;width:157px;height:23px;line-height:23px;text-align:center;font-size:13.2px;color:#e0e0e0;background:#474747;border-radius:2px">Ajustes</div><div class="t" style="left:752.4000000000001px;top:604.0px;width:157px;height:23px;line-height:23px;text-align:center;font-size:13.2px;color:#e0e0e0;background:#474747;border-radius:2px">Salir</div><svg class="ic" style="left:786px;top:516px;width:14px;height:20px" viewBox="0 0 14 20"><path d="M1,1 V16 L4.5,12.5 L7,18.5 L9.5,17.5 L7,11.5 H12 Z" fill="#fff" stroke="#222" stroke-width="1"/></svg><svg class="ic" style="left:453px;top:636px;width:18px;height:14px" viewBox="0 0 18 14"><circle cx="9" cy="7" r="2.3" fill="#aaa"/><path d="M5.5,3.5 Q3.5,7 5.5,10.5 M12.5,3.5 Q14.5,7 12.5,10.5 M3,1.5 Q0,7 3,12.5 M15,1.5 Q18,7 15,12.5" stroke="#aaa" stroke-width="1.3" fill="none"/></svg><div class="t" style="left:474.5px;top:636.0px;font-size:14.1px;color:#e0e0e0">LIVE: 00:00:00</div><div class="b" style="left:578.0px;top:640.0px;width:8.0px;height:8.0px;background:#e8180c;border-radius:50%"></div><div class="t" style="left:595.0px;top:636.0px;font-size:13.7px;color:#e0e0e0">REC: 00:00:00</div><div class="t" style="left:706.7px;top:636.0px;font-size:13.8px;color:#e0e0e0">CPU: 1.2%, 30.00 fps</div></div></div></div><div class="b" style="left:1.0px;top:471.0px;width:912.0px;height:185.0px;background:#3a3a3a"></div><div class="b" style="left:1.0px;top:476.0px;width:142.0px;height:154.0px;background:#3c3c3c"></div><div class="b" style="left:1.0px;top:476.0px;width:142.0px;height:27.0px;background:#474747"></div><div class="t" style="left:1.0px;top:482px;width:128.0px;text-align:center;font-size:12.8px;color:#e0e0e0">Escenas</div><svg class="ic" style="left:129.0px;top:483.0px;width:14px;height:14px;" viewBox="0 0 14 14"><use href="#i-undock"/></svg><div class="b" style="left:148.0px;top:476.0px;width:145.0px;height:154.0px;background:#3c3c3c"></div><div class="b" style="left:148.0px;top:476.0px;width:145.0px;height:27.0px;background:#474747"></div><div class="t" style="left:148.0px;top:482px;width:131.0px;text-align:center;font-size:12.8px;color:#e0e0e0">Fuentes</div><svg class="ic" style="left:279.0px;top:483.0px;width:14px;height:14px;" viewBox="0 0 14 14"><use href="#i-undock"/></svg><div class="b" style="left:297.5px;top:476.0px;width:289.0px;height:154.0px;background:#3c3c3c"></div><div class="b" style="left:297.5px;top:476.0px;width:289.0px;height:27.0px;background:#474747"></div><div class="t" style="left:297.5px;top:482px;width:275.0px;text-align:center;font-size:12.8px;color:#e0e0e0">Mezclador de audio</div><svg class="ic" style="left:572.5px;top:483.0px;width:14px;height:14px;" viewBox="0 0 14 14"><use href="#i-undock"/></svg><div class="b" style="left:591.0px;top:476.0px;width:153.0px;height:154.0px;background:#3c3c3c"></div><div class="b" style="left:591.0px;top:476.0px;width:153.0px;height:27.0px;background:#474747"></div><div class="t" style="left:599.0px;top:481.0px;font-size:12.9px;color:#e0e0e0;white-space:nowrap">Transiciones de esc...</div><svg class="ic" style="left:730.0px;top:483.0px;width:14px;height:14px;" viewBox="0 0 14 14"><use href="#i-undock"/></svg><div class="b" style="left:749.0px;top:476.0px;width:163.5px;height:154.0px;background:#3c3c3c"></div><div class="b" style="left:749.0px;top:476.0px;width:163.5px;height:27.0px;background:#474747"></div><div class="t" style="left:749.0px;top:482px;width:149.5px;text-align:center;font-size:12.8px;color:#e0e0e0">Controles</div><svg class="ic" style="left:898.5px;top:483.0px;width:14px;height:14px;" viewBox="0 0 14 14"><use href="#i-undock"/></svg><div class="b" style="left:1.0px;top:503.0px;width:142.0px;height:104.0px;background:#1e1e1e"></div><div class="b" style="left:1.0px;top:503.0px;width:142.0px;height:23.0px;background:#2e2e2e"></div><div class="t" style="left:5.0px;top:508.5px;font-size:13.3px;color:#e8e8e8">Escena</div><div class="b" style="left:1.0px;top:607.0px;width:142.0px;height:22.0px;background:#3a3a3a"></div><div class="b" style="left:148.0px;top:503.0px;width:145.0px;height:104.0px;background:#1e1e1e"></div><svg class="ic" style="left:152px;top:509px;width:15px;height:13px" viewBox="0 0 15 13"><rect x="0.7" y="0.7" width="13.6" height="9" fill="none" stroke="#ddd" stroke-width="1.4"/><path d="M5,12 H10 M7.5,10 V12" stroke="#ddd" stroke-width="1.4"/></svg><div class="t" style="left:175.0px;top:508.5px;font-size:12.8px;color:#e8e8e8;width:71px;overflow:hidden;white-space:nowrap">Captura de p</div><svg class="ic" style="left:256px;top:509px;width:14px;height:10px" viewBox="0 0 14 10"><path d="M1,5 Q7,-1.5 13,5 Q7,11.5 1,5 Z" fill="none" stroke="#ddd" stroke-width="1.5"/><circle cx="7" cy="5" r="2" fill="#ddd"/></svg><svg class="ic" style="left:280px;top:507px;width:11px;height:14px" viewBox="0 0 11 14"><path d="M3,6 V4 Q3,1 5.5,1 Q8,1 8,4" fill="none" stroke="#888" stroke-width="1.5"/><rect x="0.5" y="6" width="10" height="8" fill="#888"/></svg><div class="b" style="left:148.0px;top:607.0px;width:145.0px;height:22.0px;background:#3a3a3a"></div><svg class="ic" style="left:6.0px;top:611.0px;width:14px;height:14px" viewBox="0 0 14 14"><path d="M7,0 V14 M0,7 H14" stroke="#dcdcdc" stroke-width="1.5"/></svg><svg class="ic" style="left:28.0px;top:611.0px;width:14px;height:14px" viewBox="0 0 14 14"><path d="M0,7 H14" stroke="#dcdcdc" stroke-width="1.5"/></svg><svg class="ic" style="left:58.0px;top:611.0px;width:14px;height:14px" viewBox="0 0 14 14"><path d="M1,10 L7,4 L13,10" fill="none" stroke="#dcdcdc" stroke-width="1.6"/></svg><svg class="ic" style="left:80.0px;top:611.0px;width:14px;height:14px" viewBox="0 0 14 14"><path d="M1,4 L7,10 L13,4" fill="none" stroke="#dcdcdc" stroke-width="1.6"/></svg><svg class="ic" style="left:154.0px;top:611.0px;width:14px;height:14px" viewBox="0 0 14 14"><path d="M7,0 V14 M0,7 H14" stroke="#dcdcdc" stroke-width="1.5"/></svg><svg class="ic" style="left:176.0px;top:611.0px;width:14px;height:14px" viewBox="0 0 14 14"><path d="M0,7 H14" stroke="#dcdcdc" stroke-width="1.5"/></svg><svg class="ic" style="left:198.0px;top:610.0px;width:15px;height:15px;" viewBox="0 0 20 20"><use href="#i-gear"/></svg><svg class="ic" style="left:228.0px;top:611.0px;width:14px;height:14px" viewBox="0 0 14 14"><path d="M1,10 L7,4 L13,10" fill="none" stroke="#dcdcdc" stroke-width="1.6"/></svg><svg class="ic" style="left:250.0px;top:611.0px;width:14px;height:14px" viewBox="0 0 14 14"><path d="M1,4 L7,10 L13,4" fill="none" stroke="#dcdcdc" stroke-width="1.6"/></svg><div class="b" style="left:297.5px;top:503.0px;width:289.0px;height:127.0px;background:#1e1e1e"></div><div class="b" style="left:575.0px;top:506.0px;width:8.5px;height:120.0px;background:#3a3a3a;border-radius:4px"></div><div class="t" style="left:301.0px;top:507.0px;font-size:11.4px;color:#e0e0e0">Audio del escritorio</div><div class="t" style="left:513px;top:506.0px;width:56.5px;text-align:right;font-size:11.8px;color:#e0e0e0">0.0 dB</div><div class="b" style="left:301.0px;top:522.5px;width:180.0px;height:5.5px;background:#2f6b2f"></div><div class="b" style="left:481.0px;top:522.5px;width:49.0px;height:5.5px;background:#7a7a30"></div><div class="b" style="left:530.0px;top:522.5px;width:40.0px;height:5.5px;background:#803030"></div><div class="b" style="left:306px;top:527.5px;width:260px;height:2.5px;background:repeating-linear-gradient(90deg,#8a8a8a 0 1px,transparent 1px 4.316px)"></div><div class="b" style="left:306px;top:527.0px;width:260px;height:4px;background:repeating-linear-gradient(90deg,#cfcfcf 0 1.2px,transparent 1.2px 21.58px)"></div><div class="t" style="left:296.0px;top:531.0px;width:20px;text-align:center;font-size:5.5px;line-height:6px;color:#bbb">-60</div><div class="t" style="left:317.6px;top:531.0px;width:20px;text-align:center;font-size:5.5px;line-height:6px;color:#bbb">-55</div><div class="t" style="left:339.2px;top:531.0px;width:20px;text-align:center;font-size:5.5px;line-height:6px;color:#bbb">-50</div><div class="t" style="left:360.7px;top:531.0px;width:20px;text-align:center;font-size:5.5px;line-height:6px;color:#bbb">-45</div><div class="t" style="left:382.3px;top:531.0px;width:20px;text-align:center;font-size:5.5px;line-height:6px;color:#bbb">-40</div><div class="t" style="left:403.9px;top:531.0px;width:20px;text-align:center;font-size:5.5px;line-height:6px;color:#bbb">-35</div><div class="t" style="left:425.5px;top:531.0px;width:20px;text-align:center;font-size:5.5px;line-height:6px;color:#bbb">-30</div><div class="t" style="left:447.1px;top:531.0px;width:20px;text-align:center;font-size:5.5px;line-height:6px;color:#bbb">-25</div><div class="t" style="left:468.6px;top:531.0px;width:20px;text-align:center;font-size:5.5px;line-height:6px;color:#bbb">-20</div><div class="t" style="left:490.2px;top:531.0px;width:20px;text-align:center;font-size:5.5px;line-height:6px;color:#bbb">-15</div><div class="t" style="left:511.8px;top:531.0px;width:20px;text-align:center;font-size:5.5px;line-height:6px;color:#bbb">-10</div><div class="t" style="left:533.4px;top:531.0px;width:20px;text-align:center;font-size:5.5px;line-height:6px;color:#bbb">-5</div><div class="t" style="left:555.0px;top:531.0px;width:20px;text-align:center;font-size:5.5px;line-height:6px;color:#bbb">0</div><div class="b" style="left:301.0px;top:546.0px;width:204.0px;height:4.0px;background:#2f7bd8;border-radius:2px"></div><div class="b" style="left:503.0px;top:543.5px;width:16.0px;height:9.0px;background:#d8d8d8;border-radius:2px"></div><svg class="ic" style="left:524.0px;top:540.0px;width:20px;height:16px;" viewBox="0 0 20 16"><use href="#i-spk"/></svg><svg class="ic" style="left:551.0px;top:538.5px;width:19px;height:19px;" viewBox="0 0 20 20"><use href="#i-gear"/></svg><div class="t" style="left:301.0px;top:565.5px;font-size:11.4px;color:#e0e0e0">Mic/Aux</div><div class="t" style="left:513px;top:564.5px;width:56.5px;text-align:right;font-size:11.8px;color:#e0e0e0">0.0 dB</div><div class="b" style="left:301.0px;top:581.0px;width:157.0px;height:5.5px;background:#4ac84a"></div><div class="b" style="left:458.0px;top:581.0px;width:23.0px;height:5.5px;background:#2f6b2f"></div><div class="b" style="left:301.0px;top:581.0px;width:3.0px;height:5.5px;background:#e0603a"></div><div class="b" style="left:332.0px;top:581.0px;width:1.5px;height:5.5px;background:#1e1e1e"></div><div class="b" style="left:481.0px;top:581.0px;width:49.0px;height:5.5px;background:#7a7a30"></div><div class="b" style="left:530.0px;top:581.0px;width:40.0px;height:5.5px;background:#803030"></div><div class="b" style="left:306px;top:586.0px;width:260px;height:2.5px;background:repeating-linear-gradient(90deg,#8a8a8a 0 1px,transparent 1px 4.316px)"></div><div class="b" style="left:306px;top:585.5px;width:260px;height:4px;background:repeating-linear-gradient(90deg,#cfcfcf 0 1.2px,transparent 1.2px 21.58px)"></div><div class="t" style="left:296.0px;top:589.5px;width:20px;text-align:center;font-size:5.5px;line-height:6px;color:#bbb">-60</div><div class="t" style="left:317.6px;top:589.5px;width:20px;text-align:center;font-size:5.5px;line-height:6px;color:#bbb">-55</div><div class="t" style="left:339.2px;top:589.5px;width:20px;text-align:center;font-size:5.5px;line-height:6px;color:#bbb">-50</div><div class="t" style="left:360.7px;top:589.5px;width:20px;text-align:center;font-size:5.5px;line-height:6px;color:#bbb">-45</div><div class="t" style="left:382.3px;top:589.5px;width:20px;text-align:center;font-size:5.5px;line-height:6px;color:#bbb">-40</div><div class="t" style="left:403.9px;top:589.5px;width:20px;text-align:center;font-size:5.5px;line-height:6px;color:#bbb">-35</div><div class="t" style="left:425.5px;top:589.5px;width:20px;text-align:center;font-size:5.5px;line-height:6px;color:#bbb">-30</div><div class="t" style="left:447.1px;top:589.5px;width:20px;text-align:center;font-size:5.5px;line-height:6px;color:#bbb">-25</div><div class="t" style="left:468.6px;top:589.5px;width:20px;text-align:center;font-size:5.5px;line-height:6px;color:#bbb">-20</div><div class="t" style="left:490.2px;top:589.5px;width:20px;text-align:center;font-size:5.5px;line-height:6px;color:#bbb">-15</div><div class="t" style="left:511.8px;top:589.5px;width:20px;text-align:center;font-size:5.5px;line-height:6px;color:#bbb">-10</div><div class="t" style="left:533.4px;top:589.5px;width:20px;text-align:center;font-size:5.5px;line-height:6px;color:#bbb">-5</div><div class="t" style="left:555.0px;top:589.5px;width:20px;text-align:center;font-size:5.5px;line-height:6px;color:#bbb">0</div><div class="b" style="left:301.0px;top:604.5px;width:204.0px;height:4.0px;background:#2f7bd8;border-radius:2px"></div><div class="b" style="left:503.0px;top:602.0px;width:16.0px;height:9.0px;background:#d8d8d8;border-radius:2px"></div><svg class="ic" style="left:524.0px;top:598.5px;width:20px;height:16px;" viewBox="0 0 20 16"><use href="#i-spk"/></svg><svg class="ic" style="left:551.0px;top:597.0px;width:19px;height:19px;" viewBox="0 0 20 20"><use href="#i-gear"/></svg><div class="b" style="left:594.5px;top:506.0px;width:146.0px;height:21.0px;background:#474747;border-radius:2px"></div><div class="b" style="left:722.5px;top:506.0px;width:1.0px;height:21.0px;background:#3a3a3a"></div><div class="t" style="left:602.0px;top:508.0px;font-size:13px;color:#e0e0e0">Desvanecimiento</div><svg class="ic" style="left:726px;top:510px;width:10px;height:13px" viewBox="0 0 10 13"><path d="M2,5 L5,2 L8,5 M2,8 L5,11 L8,8" fill="none" stroke="#aaa" stroke-width="1"/></svg><svg class="ic" style="left:678.0px;top:528.5px;width:19px;height:19px" viewBox="0 0 14 14"><path d="M7,0 V14 M0,7 H14" stroke="#e0e0e0" stroke-width="2"/></svg><svg class="ic" style="left:700.0px;top:528.5px;width:19px;height:19px" viewBox="0 0 14 14"><path d="M0,7 H14" stroke="#e0e0e0" stroke-width="2"/></svg><svg class="ic" style="left:721.0px;top:528.0px;width:20px;height:20px;" viewBox="0 0 20 20"><use href="#i-gear"/></svg><div class="t" style="left:594.0px;top:552.0px;font-size:13.2px;color:#e0e0e0">Duración</div><div class="b" style="left:651.5px;top:549.5px;width:75.0px;height:21.5px;background:#1c1c1c"></div><div class="t" style="left:658.0px;top:551.5px;font-size:13.5px;color:#eee">300 ms</div><div class="b" style="left:727.0px;top:549.5px;width:14.0px;height:21.5px;background:#3f3f3f"></div><svg class="ic" style="left:727px;top:550px;width:14px;height:21px" viewBox="0 0 14 21"><path d="M2,8 L7,3 L12,8 M2,13 L7,18 L12,13" fill="none" stroke="#ccc" stroke-width="1.4"/></svg><div class="t" style="left:752.4000000000001px;top:505.9px;width:157px;height:23px;line-height:23px;text-align:center;font-size:13.2px;color:#e0e0e0;background:#777777;border-radius:2px"></div><div class="t" style="left:752.4000000000001px;top:530.9px;width:157px;height:23px;line-height:23px;text-align:center;font-size:13.2px;color:#e0e0e0;background:#707070;border-radius:2px">Detener grabación</div><div class="t" style="left:752.4000000000001px;top:555.0px;width:157px;height:23px;line-height:23px;text-align:center;font-size:13.2px;color:#e0e0e0;background:#474747;border-radius:2px">Modo de estudio</div><div class="t" style="left:752.4000000000001px;top:579.5px;width:157px;height:23px;line-height:23px;text-align:center;font-size:13.2px;color:#e0e0e0;background:#474747;border-radius:2px">Ajustes</div><div class="t" style="left:752.4000000000001px;top:604.0px;width:157px;height:23px;line-height:23px;text-align:center;font-size:13.2px;color:#e0e0e0;background:#474747;border-radius:2px">Salir</div><svg class="ic" style="left:786px;top:516px;width:14px;height:20px" viewBox="0 0 14 20"><path d="M1,1 V16 L4.5,12.5 L7,18.5 L9.5,17.5 L7,11.5 H12 Z" fill="#fff" stroke="#222" stroke-width="1"/></svg><svg class="ic" style="left:453px;top:636px;width:18px;height:14px" viewBox="0 0 18 14"><circle cx="9" cy="7" r="2.3" fill="#aaa"/><path d="M5.5,3.5 Q3.5,7 5.5,10.5 M12.5,3.5 Q14.5,7 12.5,10.5 M3,1.5 Q0,7 3,12.5 M15,1.5 Q18,7 15,12.5" stroke="#aaa" stroke-width="1.3" fill="none"/></svg><div class="t" style="left:474.5px;top:636.0px;font-size:14.1px;color:#e0e0e0">LIVE: 00:00:00</div><div class="b" style="left:578.0px;top:640.0px;width:8.0px;height:8.0px;background:#e8180c;border-radius:50%"></div><div class="t" style="left:595.0px;top:636.0px;font-size:13.7px;color:#e0e0e0">REC: 00:00:00</div><div class="t" style="left:706.7px;top:636.0px;font-size:13.8px;color:#e0e0e0">CPU: 1.2%, 30.00 fps</div></div></div></div><div class="b" style="left:1.0px;top:471.0px;width:912.0px;height:185.0px;background:#3a3a3a"></div><div class="b" style="left:1.0px;top:476.0px;width:142.0px;height:154.0px;background:#3c3c3c"></div><div class="b" style="left:1.0px;top:476.0px;width:142.0px;height:27.0px;background:#474747"></div><div class="t" style="left:1.0px;top:482px;width:128.0px;text-align:center;font-size:12.8px;color:#e0e0e0">Escenas</div><svg class="ic" style="left:129.0px;top:483.0px;width:14px;height:14px;" viewBox="0 0 14 14"><use href="#i-undock"/></svg><div class="b" style="left:148.0px;top:476.0px;width:145.0px;height:154.0px;background:#3c3c3c"></div><div class="b" style="left:148.0px;top:476.0px;width:145.0px;height:27.0px;background:#474747"></div><div class="t" style="left:148.0px;top:482px;width:131.0px;text-align:center;font-size:12.8px;color:#e0e0e0">Fuentes</div><svg class="ic" style="left:279.0px;top:483.0px;width:14px;height:14px;" viewBox="0 0 14 14"><use href="#i-undock"/></svg><div class="b" style="left:297.5px;top:476.0px;width:289.0px;height:154.0px;background:#3c3c3c"></div><div class="b" style="left:297.5px;top:476.0px;width:289.0px;height:27.0px;background:#474747"></div><div class="t" style="left:297.5px;top:482px;width:275.0px;text-align:center;font-size:12.8px;color:#e0e0e0">Mezclador de audio</div><svg class="ic" style="left:572.5px;top:483.0px;width:14px;height:14px;" viewBox="0 0 14 14"><use href="#i-undock"/></svg><div class="b" style="left:591.0px;top:476.0px;width:153.0px;height:154.0px;background:#3c3c3c"></div><div class="b" style="left:591.0px;top:476.0px;width:153.0px;height:27.0px;background:#474747"></div><div class="t" style="left:599.0px;top:481.0px;font-size:12.9px;color:#e0e0e0;white-space:nowrap">Transiciones de esc...</div><svg class="ic" style="left:730.0px;top:483.0px;width:14px;height:14px;" viewBox="0 0 14 14"><use href="#i-undock"/></svg><div class="b" style="left:749.0px;top:476.0px;width:163.5px;height:154.0px;background:#3c3c3c"></div><div class="b" style="left:749.0px;top:476.0px;width:163.5px;height:27.0px;background:#474747"></div><div class="t" style="left:749.0px;top:482px;width:149.5px;text-align:center;font-size:12.8px;color:#e0e0e0">Controles</div><svg class="ic" style="left:898.5px;top:483.0px;width:14px;height:14px;" viewBox="0 0 14 14"><use href="#i-undock"/></svg><div class="b" style="left:1.0px;top:503.0px;width:142.0px;height:104.0px;background:#1e1e1e"></div><div class="b" style="left:1.0px;top:503.0px;width:142.0px;height:23.0px;background:#2e2e2e"></div><div class="t" style="left:5.0px;top:508.5px;font-size:13.3px;color:#e8e8e8">Escena</div><div class="b" style="left:1.0px;top:607.0px;width:142.0px;height:22.0px;background:#3a3a3a"></div><div class="b" style="left:148.0px;top:503.0px;width:145.0px;height:104.0px;background:#1e1e1e"></div><svg class="ic" style="left:152px;top:509px;width:15px;height:13px" viewBox="0 0 15 13"><rect x="0.7" y="0.7" width="13.6" height="9" fill="none" stroke="#ddd" stroke-width="1.4"/><path d="M5,12 H10 M7.5,10 V12" stroke="#ddd" stroke-width="1.4"/></svg><div class="t" style="left:175.0px;top:508.5px;font-size:12.8px;color:#e8e8e8;width:71px;overflow:hidden;white-space:nowrap">Captura de p</div><svg class="ic" style="left:256px;top:509px;width:14px;height:10px" viewBox="0 0 14 10"><path d="M1,5 Q7,-1.5 13,5 Q7,11.5 1,5 Z" fill="none" stroke="#ddd" stroke-width="1.5"/><circle cx="7" cy="5" r="2" fill="#ddd"/></svg><svg class="ic" style="left:280px;top:507px;width:11px;height:14px" viewBox="0 0 11 14"><path d="M3,6 V4 Q3,1 5.5,1 Q8,1 8,4" fill="none" stroke="#888" stroke-width="1.5"/><rect x="0.5" y="6" width="10" height="8" fill="#888"/></svg><div class="b" style="left:148.0px;top:607.0px;width:145.0px;height:22.0px;background:#3a3a3a"></div><svg class="ic" style="left:6.0px;top:611.0px;width:14px;height:14px" viewBox="0 0 14 14"><path d="M7,0 V14 M0,7 H14" stroke="#dcdcdc" stroke-width="1.5"/></svg><svg class="ic" style="left:28.0px;top:611.0px;width:14px;height:14px" viewBox="0 0 14 14"><path d="M0,7 H14" stroke="#dcdcdc" stroke-width="1.5"/></svg><svg class="ic" style="left:58.0px;top:611.0px;width:14px;height:14px" viewBox="0 0 14 14"><path d="M1,10 L7,4 L13,10" fill="none" stroke="#dcdcdc" stroke-width="1.6"/></svg><svg class="ic" style="left:80.0px;top:611.0px;width:14px;height:14px" viewBox="0 0 14 14"><path d="M1,4 L7,10 L13,4" fill="none" stroke="#dcdcdc" stroke-width="1.6"/></svg><svg class="ic" style="left:154.0px;top:611.0px;width:14px;height:14px" viewBox="0 0 14 14"><path d="M7,0 V14 M0,7 H14" stroke="#dcdcdc" stroke-width="1.5"/></svg><svg class="ic" style="left:176.0px;top:611.0px;width:14px;height:14px" viewBox="0 0 14 14"><path d="M0,7 H14" stroke="#dcdcdc" stroke-width="1.5"/></svg><svg class="ic" style="left:198.0px;top:610.0px;width:15px;height:15px;" viewBox="0 0 20 20"><use href="#i-gear"/></svg><svg class="ic" style="left:228.0px;top:611.0px;width:14px;height:14px" viewBox="0 0 14 14"><path d="M1,10 L7,4 L13,10" fill="none" stroke="#dcdcdc" stroke-width="1.6"/></svg><svg class="ic" style="left:250.0px;top:611.0px;width:14px;height:14px" viewBox="0 0 14 14"><path d="M1,4 L7,10 L13,4" fill="none" stroke="#dcdcdc" stroke-width="1.6"/></svg><div class="b" style="left:297.5px;top:503.0px;width:289.0px;height:127.0px;background:#1e1e1e"></div><div class="b" style="left:575.0px;top:506.0px;width:8.5px;height:120.0px;background:#3a3a3a;border-radius:4px"></div><div class="t" style="left:301.0px;top:507.0px;font-size:11.4px;color:#e0e0e0">Audio del escritorio</div><div class="t" style="left:513px;top:506.0px;width:56.5px;text-align:right;font-size:11.8px;color:#e0e0e0">0.0 dB</div><div class="b" style="left:301.0px;top:522.5px;width:180.0px;height:5.5px;background:#2f6b2f"></div><div class="b" style="left:481.0px;top:522.5px;width:49.0px;height:5.5px;background:#7a7a30"></div><div class="b" style="left:530.0px;top:522.5px;width:40.0px;height:5.5px;background:#803030"></div><div class="b" style="left:306px;top:527.5px;width:260px;height:2.5px;background:repeating-linear-gradient(90deg,#8a8a8a 0 1px,transparent 1px 4.316px)"></div><div class="b" style="left:306px;top:527.0px;width:260px;height:4px;background:repeating-linear-gradient(90deg,#cfcfcf 0 1.2px,transparent 1.2px 21.58px)"></div><div class="t" style="left:296.0px;top:531.0px;width:20px;text-align:center;font-size:5.5px;line-height:6px;color:#bbb">-60</div><div class="t" style="left:317.6px;top:531.0px;width:20px;text-align:center;font-size:5.5px;line-height:6px;color:#bbb">-55</div><div class="t" style="left:339.2px;top:531.0px;width:20px;text-align:center;font-size:5.5px;line-height:6px;color:#bbb">-50</div><div class="t" style="left:360.7px;top:531.0px;width:20px;text-align:center;font-size:5.5px;line-height:6px;color:#bbb">-45</div><div class="t" style="left:382.3px;top:531.0px;width:20px;text-align:center;font-size:5.5px;line-height:6px;color:#bbb">-40</div><div class="t" style="left:403.9px;top:531.0px;width:20px;text-align:center;font-size:5.5px;line-height:6px;color:#bbb">-35</div><div class="t" style="left:425.5px;top:531.0px;width:20px;text-align:center;font-size:5.5px;line-height:6px;color:#bbb">-30</div><div class="t" style="left:447.1px;top:531.0px;width:20px;text-align:center;font-size:5.5px;line-height:6px;color:#bbb">-25</div><div class="t" style="left:468.6px;top:531.0px;width:20px;text-align:center;font-size:5.5px;line-height:6px;color:#bbb">-20</div><div class="t" style="left:490.2px;top:531.0px;width:20px;text-align:center;font-size:5.5px;line-height:6px;color:#bbb">-15</div><div class="t" style="left:511.8px;top:531.0px;width:20px;text-align:center;font-size:5.5px;line-height:6px;color:#bbb">-10</div><div class="t" style="left:533.4px;top:531.0px;width:20px;text-align:center;font-size:5.5px;line-height:6px;color:#bbb">-5</div><div class="t" style="left:555.0px;top:531.0px;width:20px;text-align:center;font-size:5.5px;line-height:6px;color:#bbb">0</div><div class="b" style="left:301.0px;top:546.0px;width:204.0px;height:4.0px;background:#2f7bd8;border-radius:2px"></div><div class="b" style="left:503.0px;top:543.5px;width:16.0px;height:9.0px;background:#d8d8d8;border-radius:2px"></div><svg class="ic" style="left:524.0px;top:540.0px;width:20px;height:16px;" viewBox="0 0 20 16"><use href="#i-spk"/></svg><svg class="ic" style="left:551.0px;top:538.5px;width:19px;height:19px;" viewBox="0 0 20 20"><use href="#i-gear"/></svg><div class="t" style="left:301.0px;top:565.5px;font-size:11.4px;color:#e0e0e0">Mic/Aux</div><div class="t" style="left:513px;top:564.5px;width:56.5px;text-align:right;font-size:11.8px;color:#e0e0e0">0.0 dB</div><div class="b" style="left:301.0px;top:581.0px;width:157.0px;height:5.5px;background:#4ac84a"></div><div class="b" style="left:458.0px;top:581.0px;width:23.0px;height:5.5px;background:#2f6b2f"></div><div class="b" style="left:301.0px;top:581.0px;width:3.0px;height:5.5px;background:#e0603a"></div><div class="b" style="left:332.0px;top:581.0px;width:1.5px;height:5.5px;background:#1e1e1e"></div><div class="b" style="left:481.0px;top:581.0px;width:49.0px;height:5.5px;background:#7a7a30"></div><div class="b" style="left:530.0px;top:581.0px;width:40.0px;height:5.5px;background:#803030"></div><div class="b" style="left:306px;top:586.0px;width:260px;height:2.5px;background:repeating-linear-gradient(90deg,#8a8a8a 0 1px,transparent 1px 4.316px)"></div><div class="b" style="left:306px;top:585.5px;width:260px;height:4px;background:repeating-linear-gradient(90deg,#cfcfcf 0 1.2px,transparent 1.2px 21.58px)"></div><div class="t" style="left:296.0px;top:589.5px;width:20px;text-align:center;font-size:5.5px;line-height:6px;color:#bbb">-60</div><div class="t" style="left:317.6px;top:589.5px;width:20px;text-align:center;font-size:5.5px;line-height:6px;color:#bbb">-55</div><div class="t" style="left:339.2px;top:589.5px;width:20px;text-align:center;font-size:5.5px;line-height:6px;color:#bbb">-50</div><div class="t" style="left:360.7px;top:589.5px;width:20px;text-align:center;font-size:5.5px;line-height:6px;color:#bbb">-45</div><div class="t" style="left:382.3px;top:589.5px;width:20px;text-align:center;font-size:5.5px;line-height:6px;color:#bbb">-40</div><div class="t" style="left:403.9px;top:589.5px;width:20px;text-align:center;font-size:5.5px;line-height:6px;color:#bbb">-35</div><div class="t" style="left:425.5px;top:589.5px;width:20px;text-align:center;font-size:5.5px;line-height:6px;color:#bbb">-30</div><div class="t" style="left:447.1px;top:589.5px;width:20px;text-align:center;font-size:5.5px;line-height:6px;color:#bbb">-25</div><div class="t" style="left:468.6px;top:589.5px;width:20px;text-align:center;font-size:5.5px;line-height:6px;color:#bbb">-20</div><div class="t" style="left:490.2px;top:589.5px;width:20px;text-align:center;font-size:5.5px;line-height:6px;color:#bbb">-15</div><div class="t" style="left:511.8px;top:589.5px;width:20px;text-align:center;font-size:5.5px;line-height:6px;color:#bbb">-10</div><div class="t" style="left:533.4px;top:589.5px;width:20px;text-align:center;font-size:5.5px;line-height:6px;color:#bbb">-5</div><div class="t" style="left:555.0px;top:589.5px;width:20px;text-align:center;font-size:5.5px;line-height:6px;color:#bbb">0</div><div class="b" style="left:301.0px;top:604.5px;width:204.0px;height:4.0px;background:#2f7bd8;border-radius:2px"></div><div class="b" style="left:503.0px;top:602.0px;width:16.0px;height:9.0px;background:#d8d8d8;border-radius:2px"></div><svg class="ic" style="left:524.0px;top:598.5px;width:20px;height:16px;" viewBox="0 0 20 16"><use href="#i-spk"/></svg><svg class="ic" style="left:551.0px;top:597.0px;width:19px;height:19px;" viewBox="0 0 20 20"><use href="#i-gear"/></svg><div class="b" style="left:594.5px;top:506.0px;width:146.0px;height:21.0px;background:#474747;border-radius:2px"></div><div class="b" style="left:722.5px;top:506.0px;width:1.0px;height:21.0px;background:#3a3a3a"></div><div class="t" style="left:602.0px;top:508.0px;font-size:13px;color:#e0e0e0">Desvanecimiento</div><svg class="ic" style="left:726px;top:510px;width:10px;height:13px" viewBox="0 0 10 13"><path d="M2,5 L5,2 L8,5 M2,8 L5,11 L8,8" fill="none" stroke="#aaa" stroke-width="1"/></svg><svg class="ic" style="left:678.0px;top:528.5px;width:19px;height:19px" viewBox="0 0 14 14"><path d="M7,0 V14 M0,7 H14" stroke="#e0e0e0" stroke-width="2"/></svg><svg class="ic" style="left:700.0px;top:528.5px;width:19px;height:19px" viewBox="0 0 14 14"><path d="M0,7 H14" stroke="#e0e0e0" stroke-width="2"/></svg><svg class="ic" style="left:721.0px;top:528.0px;width:20px;height:20px;" viewBox="0 0 20 20"><use href="#i-gear"/></svg><div class="t" style="left:594.0px;top:552.0px;font-size:13.2px;color:#e0e0e0">Duración</div><div class="b" style="left:651.5px;top:549.5px;width:75.0px;height:21.5px;background:#1c1c1c"></div><div class="t" style="left:658.0px;top:551.5px;font-size:13.5px;color:#eee">300 ms</div><div class="b" style="left:727.0px;top:549.5px;width:14.0px;height:21.5px;background:#3f3f3f"></div><svg class="ic" style="left:727px;top:550px;width:14px;height:21px" viewBox="0 0 14 21"><path d="M2,8 L7,3 L12,8 M2,13 L7,18 L12,13" fill="none" stroke="#ccc" stroke-width="1.4"/></svg><div class="t" style="left:752.4000000000001px;top:505.9px;width:157px;height:23px;line-height:23px;text-align:center;font-size:13.2px;color:#e0e0e0;background:#777777;border-radius:2px"></div><div class="t" style="left:752.4000000000001px;top:530.9px;width:157px;height:23px;line-height:23px;text-align:center;font-size:13.2px;color:#e0e0e0;background:#707070;border-radius:2px">Detener grabación</div><div class="t" style="left:752.4000000000001px;top:555.0px;width:157px;height:23px;line-height:23px;text-align:center;font-size:13.2px;color:#e0e0e0;background:#474747;border-radius:2px">Modo de estudio</div><div class="t" style="left:752.4000000000001px;top:579.5px;width:157px;height:23px;line-height:23px;text-align:center;font-size:13.2px;color:#e0e0e0;background:#474747;border-radius:2px">Ajustes</div><div class="t" style="left:752.4000000000001px;top:604.0px;width:157px;height:23px;line-height:23px;text-align:center;font-size:13.2px;color:#e0e0e0;background:#474747;border-radius:2px">Salir</div><svg class="ic" style="left:786px;top:516px;width:14px;height:20px" viewBox="0 0 14 20"><path d="M1,1 V16 L4.5,12.5 L7,18.5 L9.5,17.5 L7,11.5 H12 Z" fill="#fff" stroke="#222" stroke-width="1"/></svg><svg class="ic" style="left:453px;top:636px;width:18px;height:14px" viewBox="0 0 18 14"><circle cx="9" cy="7" r="2.3" fill="#aaa"/><path d="M5.5,3.5 Q3.5,7 5.5,10.5 M12.5,3.5 Q14.5,7 12.5,10.5 M3,1.5 Q0,7 3,12.5 M15,1.5 Q18,7 15,12.5" stroke="#aaa" stroke-width="1.3" fill="none"/></svg><div class="t" style="left:474.5px;top:636.0px;font-size:14.1px;color:#e0e0e0">LIVE: 00:00:00</div><div class="b" style="left:578.0px;top:640.0px;width:8.0px;height:8.0px;background:#e8180c;border-radius:50%"></div><div class="t" style="left:595.0px;top:636.0px;font-size:13.7px;color:#e0e0e0">REC: 00:00:00</div><div class="t" style="left:706.7px;top:636.0px;font-size:13.8px;color:#e0e0e0">CPU: 1.2%, 30.00 fps</div></div></div></div><div class="b" style="left:1.0px;top:471.0px;width:912.0px;height:185.0px;background:#3a3a3a"></div><div class="b" style="left:1.0px;top:476.0px;width:142.0px;height:154.0px;background:#3c3c3c"></div><div class="b" style="left:1.0px;top:476.0px;width:142.0px;height:27.0px;background:#474747"></div><div class="t" style="left:1.0px;top:482px;width:128.0px;text-align:center;font-size:12.8px;color:#e0e0e0">Escenas</div><svg class="ic" style="left:129.0px;top:483.0px;width:14px;height:14px;" viewBox="0 0 14 14"><use href="#i-undock"/></svg><div class="b" style="left:148.0px;top:476.0px;width:145.0px;height:154.0px;background:#3c3c3c"></div><div class="b" style="left:148.0px;top:476.0px;width:145.0px;height:27.0px;background:#474747"></div><div class="t" style="left:148.0px;top:482px;width:131.0px;text-align:center;font-size:12.8px;color:#e0e0e0">Fuentes</div><svg class="ic" style="left:279.0px;top:483.0px;width:14px;height:14px;" viewBox="0 0 14 14"><use href="#i-undock"/></svg><div class="b" style="left:297.5px;top:476.0px;width:289.0px;height:154.0px;background:#3c3c3c"></div><div class="b" style="left:297.5px;top:476.0px;width:289.0px;height:27.0px;background:#474747"></div><div class="t" style="left:297.5px;top:482px;width:275.0px;text-align:center;font-size:12.8px;color:#e0e0e0">Mezclador de audio</div><svg class="ic" style="left:572.5px;top:483.0px;width:14px;height:14px;" viewBox="0 0 14 14"><use href="#i-undock"/></svg><div class="b" style="left:591.0px;top:476.0px;width:153.0px;height:154.0px;background:#3c3c3c"></div><div class="b" style="left:591.0px;top:476.0px;width:153.0px;height:27.0px;background:#474747"></div><div class="t" style="left:599.0px;top:481.0px;font-size:12.9px;color:#e0e0e0;white-space:nowrap">Transiciones de esc...</div><svg class="ic" style="left:730.0px;top:483.0px;width:14px;height:14px;" viewBox="0 0 14 14"><use href="#i-undock"/></svg><div class="b" style="left:749.0px;top:476.0px;width:163.5px;height:154.0px;background:#3c3c3c"></div><div class="b" style="left:749.0px;top:476.0px;width:163.5px;height:27.0px;background:#474747"></div><div class="t" style="left:749.0px;top:482px;width:149.5px;text-align:center;font-size:12.8px;color:#e0e0e0">Controles</div><svg class="ic" style="left:898.5px;top:483.0px;width:14px;height:14px;" viewBox="0 0 14 14"><use href="#i-undock"/></svg><div class="b" style="left:1.0px;top:503.0px;width:142.0px;height:104.0px;background:#1e1e1e"></div><div class="b" style="left:1.0px;top:503.0px;width:142.0px;height:23.0px;background:#2e2e2e"></div><div class="t" style="left:5.0px;top:508.5px;font-size:13.3px;color:#e8e8e8">Escena</div><div class="b" style="left:1.0px;top:607.0px;width:142.0px;height:22.0px;background:#3a3a3a"></div><div class="b" style="left:148.0px;top:503.0px;width:145.0px;height:104.0px;background:#1e1e1e"></div><svg class="ic" style="left:152px;top:509px;width:15px;height:13px" viewBox="0 0 15 13"><rect x="0.7" y="0.7" width="13.6" height="9" fill="none" stroke="#ddd" stroke-width="1.4"/><path d="M5,12 H10 M7.5,10 V12" stroke="#ddd" stroke-width="1.4"/></svg><div class="t" style="left:175.0px;top:508.5px;font-size:12.8px;color:#e8e8e8;width:71px;overflow:hidden;white-space:nowrap">Captura de p</div><svg class="ic" style="left:256px;top:509px;width:14px;height:10px" viewBox="0 0 14 10"><path d="M1,5 Q7,-1.5 13,5 Q7,11.5 1,5 Z" fill="none" stroke="#ddd" stroke-width="1.5"/><circle cx="7" cy="5" r="2" fill="#ddd"/></svg><svg class="ic" style="left:280px;top:507px;width:11px;height:14px" viewBox="0 0 11 14"><path d="M3,6 V4 Q3,1 5.5,1 Q8,1 8,4" fill="none" stroke="#888" stroke-width="1.5"/><rect x="0.5" y="6" width="10" height="8" fill="#888"/></svg><div class="b" style="left:148.0px;top:607.0px;width:145.0px;height:22.0px;background:#3a3a3a"></div><svg class="ic" style="left:6.0px;top:611.0px;width:14px;height:14px" viewBox="0 0 14 14"><path d="M7,0 V14 M0,7 H14" stroke="#dcdcdc" stroke-width="1.5"/></svg><svg class="ic" style="left:28.0px;top:611.0px;width:14px;height:14px" viewBox="0 0 14 14"><path d="M0,7 H14" stroke="#dcdcdc" stroke-width="1.5"/></svg><svg class="ic" style="left:58.0px;top:611.0px;width:14px;height:14px" viewBox="0 0 14 14"><path d="M1,10 L7,4 L13,10" fill="none" stroke="#dcdcdc" stroke-width="1.6"/></svg><svg class="ic" style="left:80.0px;top:611.0px;width:14px;height:14px" viewBox="0 0 14 14"><path d="M1,4 L7,10 L13,4" fill="none" stroke="#dcdcdc" stroke-width="1.6"/></svg><svg class="ic" style="left:154.0px;top:611.0px;width:14px;height:14px" viewBox="0 0 14 14"><path d="M7,0 V14 M0,7 H14" stroke="#dcdcdc" stroke-width="1.5"/></svg><svg class="ic" style="left:176.0px;top:611.0px;width:14px;height:14px" viewBox="0 0 14 14"><path d="M0,7 H14" stroke="#dcdcdc" stroke-width="1.5"/></svg><svg class="ic" style="left:198.0px;top:610.0px;width:15px;height:15px;" viewBox="0 0 20 20"><use href="#i-gear"/></svg><svg class="ic" style="left:228.0px;top:611.0px;width:14px;height:14px" viewBox="0 0 14 14"><path d="M1,10 L7,4 L13,10" fill="none" stroke="#dcdcdc" stroke-width="1.6"/></svg><svg class="ic" style="left:250.0px;top:611.0px;width:14px;height:14px" viewBox="0 0 14 14"><path d="M1,4 L7,10 L13,4" fill="none" stroke="#dcdcdc" stroke-width="1.6"/></svg><div class="b" style="left:297.5px;top:503.0px;width:289.0px;height:127.0px;background:#1e1e1e"></div><div class="b" style="left:575.0px;top:506.0px;width:8.5px;height:120.0px;background:#3a3a3a;border-radius:4px"></div><div class="t" style="left:301.0px;top:507.0px;font-size:11.4px;color:#e0e0e0">Audio del escritorio</div><div class="t" style="left:513px;top:506.0px;width:56.5px;text-align:right;font-size:11.8px;color:#e0e0e0">0.0 dB</div><div class="b" style="left:301.0px;top:522.5px;width:180.0px;height:5.5px;background:#2f6b2f"></div><div class="b" style="left:481.0px;top:522.5px;width:49.0px;height:5.5px;background:#7a7a30"></div><div class="b" style="left:530.0px;top:522.5px;width:40.0px;height:5.5px;background:#803030"></div><div class="b" style="left:306px;top:527.5px;width:260px;height:2.5px;background:repeating-linear-gradient(90deg,#8a8a8a 0 1px,transparent 1px 4.316px)"></div><div class="b" style="left:306px;top:527.0px;width:260px;height:4px;background:repeating-linear-gradient(90deg,#cfcfcf 0 1.2px,transparent 1.2px 21.58px)"></div><div class="t" style="left:296.0px;top:531.0px;width:20px;text-align:center;font-size:5.5px;line-height:6px;color:#bbb">-60</div><div class="t" style="left:317.6px;top:531.0px;width:20px;text-align:center;font-size:5.5px;line-height:6px;color:#bbb">-55</div><div class="t" style="left:339.2px;top:531.0px;width:20px;text-align:center;font-size:5.5px;line-height:6px;color:#bbb">-50</div><div class="t" style="left:360.7px;top:531.0px;width:20px;text-align:center;font-size:5.5px;line-height:6px;color:#bbb">-45</div><div class="t" style="left:382.3px;top:531.0px;width:20px;text-align:center;font-size:5.5px;line-height:6px;color:#bbb">-40</div><div class="t" style="left:403.9px;top:531.0px;width:20px;text-align:center;font-size:5.5px;line-height:6px;color:#bbb">-35</div><div class="t" style="left:425.5px;top:531.0px;width:20px;text-align:center;font-size:5.5px;line-height:6px;color:#bbb">-30</div><div class="t" style="left:447.1px;top:531.0px;width:20px;text-align:center;font-size:5.5px;line-height:6px;color:#bbb">-25</div><div class="t" style="left:468.6px;top:531.0px;width:20px;text-align:center;font-size:5.5px;line-height:6px;color:#bbb">-20</div><div class="t" style="left:490.2px;top:531.0px;width:20px;text-align:center;font-size:5.5px;line-height:6px;color:#bbb">-15</div><div class="t" style="left:511.8px;top:531.0px;width:20px;text-align:center;font-size:5.5px;line-height:6px;color:#bbb">-10</div><div class="t" style="left:533.4px;top:531.0px;width:20px;text-align:center;font-size:5.5px;line-height:6px;color:#bbb">-5</div><div class="t" style="left:555.0px;top:531.0px;width:20px;text-align:center;font-size:5.5px;line-height:6px;color:#bbb">0</div><div class="b" style="left:301.0px;top:546.0px;width:204.0px;height:4.0px;background:#2f7bd8;border-radius:2px"></div><div class="b" style="left:503.0px;top:543.5px;width:16.0px;height:9.0px;background:#d8d8d8;border-radius:2px"></div><svg class="ic" style="left:524.0px;top:540.0px;width:20px;height:16px;" viewBox="0 0 20 16"><use href="#i-spk"/></svg><svg class="ic" style="left:551.0px;top:538.5px;width:19px;height:19px;" viewBox="0 0 20 20"><use href="#i-gear"/></svg><div class="t" style="left:301.0px;top:565.5px;font-size:11.4px;color:#e0e0e0">Mic/Aux</div><div class="t" style="left:513px;top:564.5px;width:56.5px;text-align:right;font-size:11.8px;color:#e0e0e0">0.0 dB</div><div class="b" style="left:301.0px;top:581.0px;width:157.0px;height:5.5px;background:#4ac84a"></div><div class="b" style="left:458.0px;top:581.0px;width:23.0px;height:5.5px;background:#2f6b2f"></div><div class="b" style="left:301.0px;top:581.0px;width:3.0px;height:5.5px;background:#e0603a"></div><div class="b" style="left:332.0px;top:581.0px;width:1.5px;height:5.5px;background:#1e1e1e"></div><div class="b" style="left:481.0px;top:581.0px;width:49.0px;height:5.5px;background:#7a7a30"></div><div class="b" style="left:530.0px;top:581.0px;width:40.0px;height:5.5px;background:#803030"></div><div class="b" style="left:306px;top:586.0px;width:260px;height:2.5px;background:repeating-linear-gradient(90deg,#8a8a8a 0 1px,transparent 1px 4.316px)"></div><div class="b" style="left:306px;top:585.5px;width:260px;height:4px;background:repeating-linear-gradient(90deg,#cfcfcf 0 1.2px,transparent 1.2px 21.58px)"></div><div class="t" style="left:296.0px;top:589.5px;width:20px;text-align:center;font-size:5.5px;line-height:6px;color:#bbb">-60</div><div class="t" style="left:317.6px;top:589.5px;width:20px;text-align:center;font-size:5.5px;line-height:6px;color:#bbb">-55</div><div class="t" style="left:339.2px;top:589.5px;width:20px;text-align:center;font-size:5.5px;line-height:6px;color:#bbb">-50</div><div class="t" style="left:360.7px;top:589.5px;width:20px;text-align:center;font-size:5.5px;line-height:6px;color:#bbb">-45</div><div class="t" style="left:382.3px;top:589.5px;width:20px;text-align:center;font-size:5.5px;line-height:6px;color:#bbb">-40</div><div class="t" style="left:403.9px;top:589.5px;width:20px;text-align:center;font-size:5.5px;line-height:6px;color:#bbb">-35</div><div class="t" style="left:425.5px;top:589.5px;width:20px;text-align:center;font-size:5.5px;line-height:6px;color:#bbb">-30</div><div class="t" style="left:447.1px;top:589.5px;width:20px;text-align:center;font-size:5.5px;line-height:6px;color:#bbb">-25</div><div class="t" style="left:468.6px;top:589.5px;width:20px;text-align:center;font-size:5.5px;line-height:6px;color:#bbb">-20</div><div class="t" style="left:490.2px;top:589.5px;width:20px;text-align:center;font-size:5.5px;line-height:6px;color:#bbb">-15</div><div class="t" style="left:511.8px;top:589.5px;width:20px;text-align:center;font-size:5.5px;line-height:6px;color:#bbb">-10</div><div class="t" style="left:533.4px;top:589.5px;width:20px;text-align:center;font-size:5.5px;line-height:6px;color:#bbb">-5</div><div class="t" style="left:555.0px;top:589.5px;width:20px;text-align:center;font-size:5.5px;line-height:6px;color:#bbb">0</div><div class="b" style="left:301.0px;top:604.5px;width:204.0px;height:4.0px;background:#2f7bd8;border-radius:2px"></div><div class="b" style="left:503.0px;top:602.0px;width:16.0px;height:9.0px;background:#d8d8d8;border-radius:2px"></div><svg class="ic" style="left:524.0px;top:598.5px;width:20px;height:16px;" viewBox="0 0 20 16"><use href="#i-spk"/></svg><svg class="ic" style="left:551.0px;top:597.0px;width:19px;height:19px;" viewBox="0 0 20 20"><use href="#i-gear"/></svg><div class="b" style="left:594.5px;top:506.0px;width:146.0px;height:21.0px;background:#474747;border-radius:2px"></div><div class="b" style="left:722.5px;top:506.0px;width:1.0px;height:21.0px;background:#3a3a3a"></div><div class="t" style="left:602.0px;top:508.0px;font-size:13px;color:#e0e0e0">Desvanecimiento</div><svg class="ic" style="left:726px;top:510px;width:10px;height:13px" viewBox="0 0 10 13"><path d="M2,5 L5,2 L8,5 M2,8 L5,11 L8,8" fill="none" stroke="#aaa" stroke-width="1"/></svg><svg class="ic" style="left:678.0px;top:528.5px;width:19px;height:19px" viewBox="0 0 14 14"><path d="M7,0 V14 M0,7 H14" stroke="#e0e0e0" stroke-width="2"/></svg><svg class="ic" style="left:700.0px;top:528.5px;width:19px;height:19px" viewBox="0 0 14 14"><path d="M0,7 H14" stroke="#e0e0e0" stroke-width="2"/></svg><svg class="ic" style="left:721.0px;top:528.0px;width:20px;height:20px;" viewBox="0 0 20 20"><use href="#i-gear"/></svg><div class="t" style="left:594.0px;top:552.0px;font-size:13.2px;color:#e0e0e0">Duración</div><div class="b" style="left:651.5px;top:549.5px;width:75.0px;height:21.5px;background:#1c1c1c"></div><div class="t" style="left:658.0px;top:551.5px;font-size:13.5px;color:#eee">300 ms</div><div class="b" style="left:727.0px;top:549.5px;width:14.0px;height:21.5px;background:#3f3f3f"></div><svg class="ic" style="left:727px;top:550px;width:14px;height:21px" viewBox="0 0 14 21"><path d="M2,8 L7,3 L12,8 M2,13 L7,18 L12,13" fill="none" stroke="#ccc" stroke-width="1.4"/></svg><div class="t" style="left:752.4000000000001px;top:505.9px;width:157px;height:23px;line-height:23px;text-align:center;font-size:13.2px;color:#e0e0e0;background:#777777;border-radius:2px"></div><div class="t" style="left:752.4000000000001px;top:530.9px;width:157px;height:23px;line-height:23px;text-align:center;font-size:13.2px;color:#e0e0e0;background:#707070;border-radius:2px">Detener grabación</div><div class="t" style="left:752.4000000000001px;top:555.0px;width:157px;height:23px;line-height:23px;text-align:center;font-size:13.2px;color:#e0e0e0;background:#474747;border-radius:2px">Modo de estudio</div><div class="t" style="left:752.4000000000001px;top:579.5px;width:157px;height:23px;line-height:23px;text-align:center;font-size:13.2px;color:#e0e0e0;background:#474747;border-radius:2px">Ajustes</div><div class="t" style="left:752.4000000000001px;top:604.0px;width:157px;height:23px;line-height:23px;text-align:center;font-size:13.2px;color:#e0e0e0;background:#474747;border-radius:2px">Salir</div><svg class="ic" style="left:786px;top:516px;width:14px;height:20px" viewBox="0 0 14 20"><path d="M1,1 V16 L4.5,12.5 L7,18.5 L9.5,17.5 L7,11.5 H12 Z" fill="#fff" stroke="#222" stroke-width="1"/></svg><svg class="ic" style="left:453px;top:636px;width:18px;height:14px" viewBox="0 0 18 14"><circle cx="9" cy="7" r="2.3" fill="#aaa"/><path d="M5.5,3.5 Q3.5,7 5.5,10.5 M12.5,3.5 Q14.5,7 12.5,10.5 M3,1.5 Q0,7 3,12.5 M15,1.5 Q18,7 15,12.5" stroke="#aaa" stroke-width="1.3" fill="none"/></svg><div class="t" style="left:474.5px;top:636.0px;font-size:14.1px;color:#e0e0e0">LIVE: 00:00:00</div><div class="b" style="left:578.0px;top:640.0px;width:8.0px;height:8.0px;background:#e8180c;border-radius:50%"></div><div class="t" style="left:595.0px;top:636.0px;font-size:13.7px;color:#e0e0e0">REC: 00:00:00</div><div class="t" style="left:706.7px;top:636.0px;font-size:13.8px;color:#e0e0e0">CPU: 1.2%, 30.00 fps</div></div></div></div><div id="ctl"><div class="b" style="left:0px;top:0.0px;width:1662px;height:1px;background:#fafafa"></div><div class="b" style="left:7.5px;top:3.5px;font-size:11px;color:#000;line-height:12px">00:00</div><div class="b" style="left:52.7px;top:4.2px;width:1575px;height:8.4px;background:linear-gradient(#c4c4c4,#dedede);border-radius:4px"></div><div class="b" style="left:52.5px;top:4.5px;width:5px;height:8px;background:#2f7fd0;border-radius:50%"></div><div class="b" style="left:1643.5px;top:3.5px;font-size:11px;color:#000;line-height:12px;white-space:nowrap">02:10</div><div class="b" style="left:3.4px;top:20.2px;width:29.5px;height:29.5px;box-sizing:border-box;border:1px solid #a8a8a8;background:#e6e6e6"><svg width="28" height="28" style="position:absolute;left:0;top:0" viewBox="0 0 28 28"><path d="M8,6.5 L21.5,14.5 L8,22.5 Z" fill="#767676"/></svg></div><div class="b" style="left:47.2px;top:23.2px;width:23.6px;height:23.4px;box-sizing:border-box;border:1px solid #a8a8a8;background:#e6e6e6"><svg width="22" height="22" style="position:absolute;left:0;top:0" viewBox="0 0 22 22"><rect x="4" y="6.5" width="3" height="9.5" fill="#767676"/><path d="M7,11.25 L12,6.5 V16 Z M11.5,11.25 L17,6.5 V16 Z" fill="#767676"/></svg></div><div class="b" style="left:73.3px;top:23.2px;width:23.4px;height:23.4px;box-sizing:border-box;border:1px solid #a8a8a8;background:#e6e6e6"><svg width="22" height="22" style="position:absolute;left:0;top:0" viewBox="0 0 22 22"><rect x="6.5" y="6.5" width="9.5" height="9.5" fill="#767676"/></svg></div><div class="b" style="left:99.2px;top:23.2px;width:23.5px;height:23.4px;box-sizing:border-box;border:1px solid #a8a8a8;background:#e6e6e6"><svg width="22" height="22" style="position:absolute;left:0;top:0" viewBox="0 0 22 22"><rect x="15" y="6.5" width="3" height="9.5" fill="#767676"/><path d="M15,11.25 L10,6.5 V16 Z M10.5,11.25 L5,6.5 V16 Z" fill="#767676"/></svg></div><div class="b" style="left:137.2px;top:23.0px;width:23.6px;height:23.6px;box-sizing:border-box;border:1px solid #a8a8a8;background:#e6e6e6"><svg width="22" height="22" style="position:absolute;left:0;top:0" viewBox="0 0 22 22"><path d="M4,8.5 V4.5 H8 M14,4.5 H18 V8.5 M18,13.5 V17.5 H14 M8,17.5 H4 V13.5" fill="none" stroke="#767676" stroke-width="2"/></svg></div><div class="b" style="left:163.2px;top:23.0px;width:23.6px;height:23.6px;box-sizing:border-box;border:1px solid #a8a8a8;background:#e6e6e6"><svg width="22" height="22" style="position:absolute;left:0;top:0" viewBox="0 0 22 22"><path d="M6,4.5 V18 M11,4.5 V18 M16,4.5 V18" stroke="#767676" stroke-width="2"/><rect x="4" y="6.5" width="4" height="3" fill="#767676"/><rect x="9" y="13" width="4" height="3" fill="#767676"/><rect x="14" y="9" width="4" height="3" fill="#767676"/></svg></div><div class="b" style="left:201.2px;top:23.0px;width:23.6px;height:23.6px;box-sizing:border-box;border:1px solid #a8a8a8;background:#e6e6e6"><svg width="22" height="22" style="position:absolute;left:0;top:0" viewBox="0 0 22 22"><path d="M4,6 H18 M4,10 H18 M4,14.5 H13" stroke="#767676" stroke-width="2"/><path d="M15,12.5 L19,15.5 L15,18.5 Z" fill="#767676"/></svg></div><div class="b" style="left:227.2px;top:23.0px;width:23.6px;height:23.6px;box-sizing:border-box;border:1px solid #a8a8a8;background:#e6e6e6"><svg width="22" height="22" style="position:absolute;left:0;top:0" viewBox="0 0 22 22"><path d="M5,12 V9 Q5,6.5 8,6.5 H15 M17,10 V13 Q17,15.5 14,15.5 H7" fill="none" stroke="#767676" stroke-width="2"/><path d="M14.5,3.5 L18,6.5 L14.5,9.5 Z M7.5,12.5 L4,15.5 L7.5,18.5 Z" fill="#767676"/></svg></div><div class="b" style="left:253.2px;top:23.0px;width:23.6px;height:23.6px;box-sizing:border-box;border:1px solid #a8a8a8;background:#e6e6e6"><svg width="22" height="22" style="position:absolute;left:0;top:0" viewBox="0 0 22 22"><path d="M5,17 L17,5 M5,6 L9,9.5 M13,12.5 L17,16" fill="none" stroke="#767676" stroke-width="2"/><path d="M12,4.5 H18 V10.5 Z M18,11.5 V17.5 H12 Z" fill="#767676"/></svg></div><svg style="position:absolute;left:1578px;top:36px" width="16" height="13" viewBox="0 0 16 13"><path d="M1,4 H4 L8,1 V12 L4,9 H1 Z" fill="#777"/><path d="M9.5,4.5 Q10.8,6.5 9.5,8.5 M11.5,3 Q13.5,6.5 11.5,10 M13.5,1.5 Q16,6.5 13.5,11.5" stroke="#f0a030" stroke-width="1.1" fill="none"/></svg><div class="b" style="left:1603px;top:27px;font-size:8.5px;color:#555;line-height:10px">100%</div><svg style="position:absolute;left:1599px;top:28px" width="63" height="21" viewBox="0 0 63 21"><defs><linearGradient id="gVol" x1="0" y1="0" x2="1" y2="0"><stop offset="0" stop-color="#86d886"/><stop offset="1" stop-color="#18cc18"/></linearGradient></defs><path d="M1.5,19.5 L63,1.5 V19.5 Z" fill="#f6f8ee"/><path d="M1.5,19.5 L59,2.6 V19.5 Z" fill="url(#gVol)"/><path d="M1.5,19.5 L63,1.5 M1.5,19.5 H63" stroke="#6a6a6a" stroke-width="1.3"/></svg><div class="b" style="left:0px;top:51.0px;width:1662px;height:2px;background:#111"></div></div></body></html>
